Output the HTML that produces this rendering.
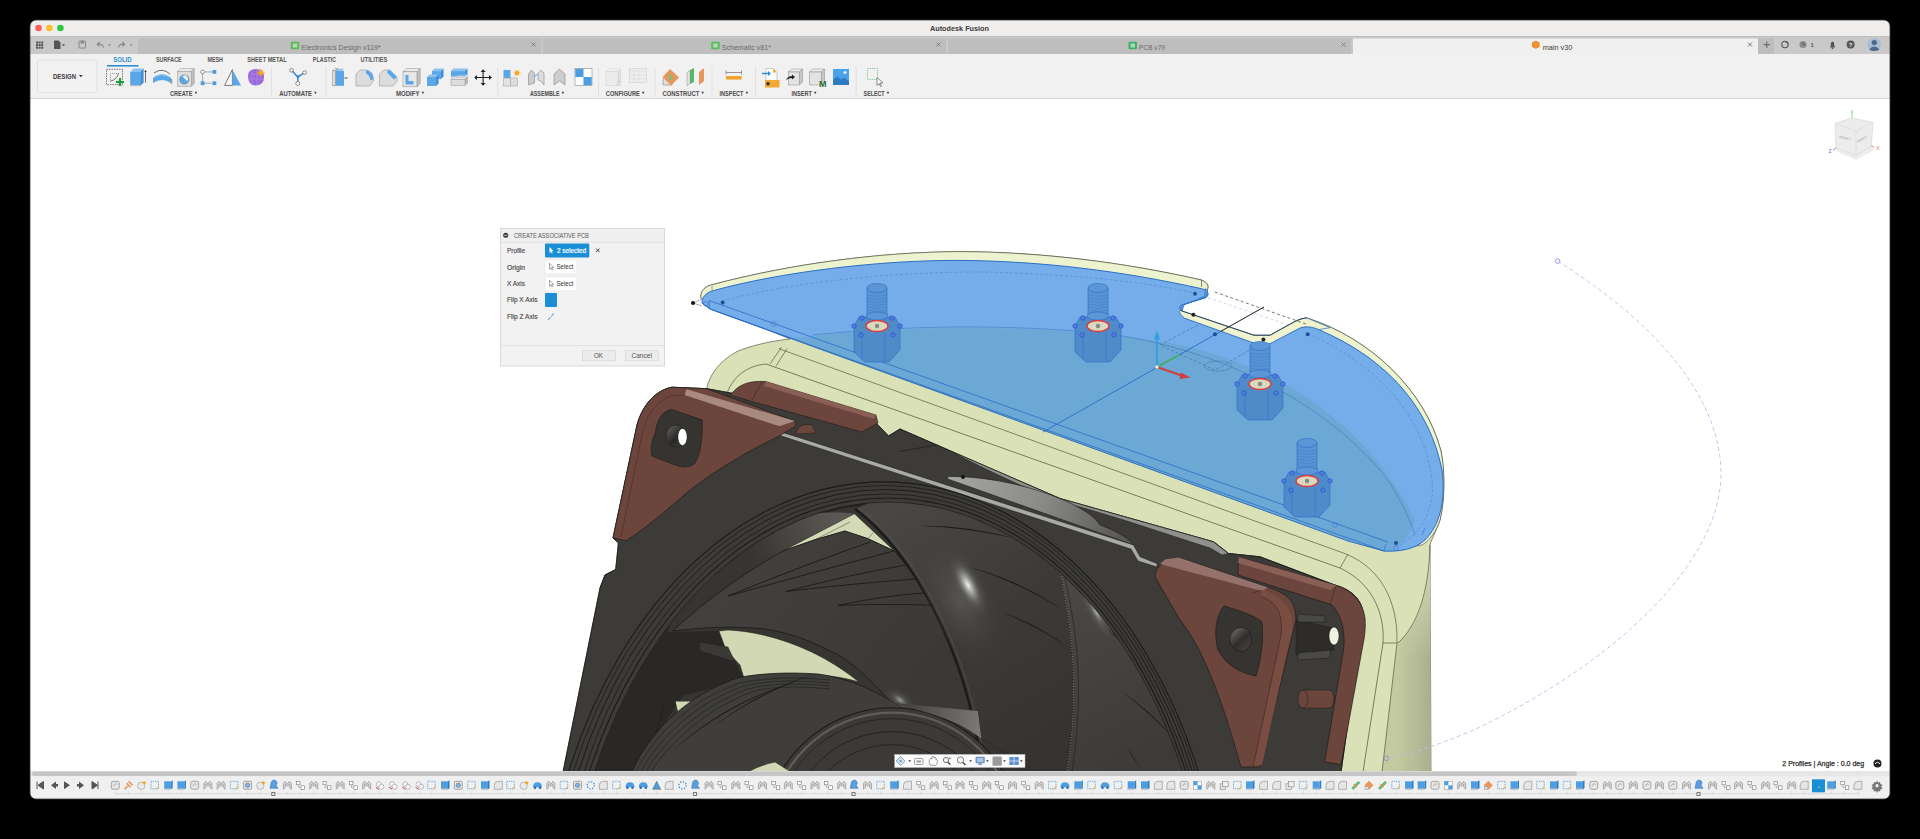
<!DOCTYPE html>
<html><head><meta charset="utf-8">
<style>
*{margin:0;padding:0}
html,body{width:1920px;height:839px;overflow:hidden;background:#000}
svg{position:absolute;left:0;top:0;font-family:"Liberation Sans",sans-serif}
</style></head><body>
<svg width="1920" height="839" viewBox="0 0 1920 839">
<rect width="1920" height="839" fill="#000"/>
<defs><clipPath id="winclip"><rect x="30" y="20" width="1860" height="779" rx="6"/></clipPath></defs>
<g clip-path="url(#winclip)">
<rect x="30" y="20" width="1860" height="779" rx="6" fill="#f0f0f0"/>
<rect x="30" y="20" width="1860" height="16" rx="6" fill="#efeeed"/>
<rect x="30" y="30" width="1860" height="6" fill="#efeeed"/>
<rect x="30" y="36" width="1860" height="18" fill="#c9c9c9"/>
<rect x="30" y="36" width="1860" height="1" fill="#bdbdbd"/>
<rect x="30" y="54" width="1860" height="45" fill="#f1f1f1"/>
<rect x="30" y="98" width="1860" height="1" fill="#dadada"/>
<circle cx="38.5" cy="28" r="3.3" fill="#fe5f57"/>
<circle cx="49.4" cy="28" r="3.3" fill="#febc2e"/>
<circle cx="60.4" cy="28" r="3.3" fill="#28c840"/>
<text x="930" y="31" font-size="7.6" fill="#3b3b3b" font-weight="bold" text-anchor="start" textLength="59" lengthAdjust="spacingAndGlyphs">Autodesk Fusion</text>
<rect x="36.0" y="41.5" width="2" height="2" fill="#555"/>
<rect x="36.0" y="44.1" width="2" height="2" fill="#555"/>
<rect x="36.0" y="46.7" width="2" height="2" fill="#555"/>
<rect x="38.6" y="41.5" width="2" height="2" fill="#555"/>
<rect x="38.6" y="44.1" width="2" height="2" fill="#555"/>
<rect x="38.6" y="46.7" width="2" height="2" fill="#555"/>
<rect x="41.2" y="41.5" width="2" height="2" fill="#555"/>
<rect x="41.2" y="44.1" width="2" height="2" fill="#555"/>
<rect x="41.2" y="46.7" width="2" height="2" fill="#555"/>
<path d="M54,40.5 h4.5 l2,2 v6.5 h-6.5 z" fill="#555"/>
<path d="M62,44.3 h3 l-1.5,2 z" fill="#555"/>
<rect x="79" y="41" width="6.5" height="7" rx="0.8" fill="none" stroke="#888" stroke-width="1"/><rect x="80.5" y="41" width="3.5" height="2.5" fill="#888"/>
<path d="M103.5,47.8 q0,-4.3 -6,-3.6 M99.8,42 l-2.6,2.2 l2.6,2.2" fill="none" stroke="#8a8a8a" stroke-width="1.1"/>
<path d="M108,44.3 h3 l-1.5,2 z" fill="#8a8a8a"/>
<path d="M118.5,47.8 q0,-4.3 6,-3.6 M122.2,42 l2.6,2.2 l-2.6,2.2" fill="none" stroke="#8a8a8a" stroke-width="1.1"/>
<path d="M129.7,44.3 h3 l-1.5,2 z" fill="#8a8a8a"/>
<rect x="138" y="38.5" width="403" height="15.5" fill="#bebebe"/>
<rect x="290.8" y="41.8" width="8.5" height="7.5" rx="1" fill="#5cb860"/><rect x="292.8" y="43.5" width="4.5" height="4" fill="#e8f5e8" opacity="0.6"/>
<text x="301.3" y="49.5" font-size="7.4" fill="#6b6b6b" font-weight="normal" text-anchor="start" textLength="79.5" lengthAdjust="spacingAndGlyphs">Electronics Design v119*</text>
<path d="M531.5,42.5 l4,4 M535.5,42.5 l-4,4" stroke="#7a7a7a" stroke-width="0.9"/>
<rect x="543" y="38.5" width="403" height="15.5" fill="#bebebe"/>
<rect x="711.2" y="41.8" width="8.5" height="7.5" rx="1" fill="#5cb860"/><rect x="713.2" y="43.5" width="4.5" height="4" fill="#e8f5e8" opacity="0.6"/>
<text x="721.7" y="49.5" font-size="7.4" fill="#6b6b6b" font-weight="normal" text-anchor="start" textLength="49.3" lengthAdjust="spacingAndGlyphs">Schematic v81*</text>
<path d="M936.5,42.5 l4,4 M940.5,42.5 l-4,4" stroke="#7a7a7a" stroke-width="0.9"/>
<rect x="948" y="38.5" width="403" height="15.5" fill="#bebebe"/>
<rect x="1128.5" y="41.8" width="8.5" height="7.5" rx="1" fill="#3fae6a"/><rect x="1130.5" y="43.5" width="4.5" height="4" fill="#e8f5e8" opacity="0.6"/>
<text x="1139" y="49.5" font-size="7.4" fill="#6b6b6b" font-weight="normal" text-anchor="start" textLength="26.0" lengthAdjust="spacingAndGlyphs">PCB v79</text>
<path d="M1341.5,42.5 l4,4 M1345.5,42.5 l-4,4" stroke="#7a7a7a" stroke-width="0.9"/>
<rect x="1353" y="38.5" width="405" height="15.5" fill="#f0f0f0"/>
<path d="M1532,42.3 l3.8,-1.6 l3.8,1.6 v4.6 l-3.8,1.8 l-3.8,-1.8 z" fill="#f08a2c"/><path d="M1532,42.3 l3.8,1.6 l3.8,-1.6 M1535.8,43.9 v4.8" stroke="#fbb468" stroke-width="0.5" fill="none"/>
<text x="1542.7" y="49.5" font-size="7.4" fill="#3a3a3a" font-weight="normal" text-anchor="start" textLength="29.6" lengthAdjust="spacingAndGlyphs">main v30</text>
<path d="M1748,42.5 l4,4 M1752,42.5 l-4,4" stroke="#6a6a6a" stroke-width="0.9"/>
<rect x="1758" y="38.5" width="16" height="15.5" fill="#bdbdbd"/>
<path d="M1766.7,41.5 v6.5 M1763.5,44.7 h6.5" stroke="#6f6f6f" stroke-width="1.2"/>
<circle cx="1785" cy="44.5" r="3.2" fill="none" stroke="#555" stroke-width="1.1"/><path d="M1785,41.3 l2.5,2.5" stroke="#555" stroke-width="1"/>
<circle cx="1803" cy="44.5" r="3.6" fill="#8a8a8a"/><path d="M1803,42.5 v2.2 h2" stroke="#555" stroke-width="0.8" fill="none"/>
<text x="1810.5" y="47" font-size="6" fill="#555" font-weight="bold" text-anchor="start" >1</text>
<path d="M1830,47.5 q0.8,-1 0.8,-3.5 q0,-2.6 1.7,-2.6 q1.7,0 1.7,2.6 q0,2.5 0.8,3.5 z" fill="#555"/><circle cx="1832.5" cy="48.4" r="0.8" fill="#555"/>
<circle cx="1850.6" cy="44.5" r="4" fill="#555"/><text x="1850.6" y="47" font-size="6" fill="#eee" font-weight="bold" text-anchor="middle" >?</text>
<circle cx="1874.3" cy="44.5" r="6.6" fill="#a9bcd3"/><circle cx="1874.3" cy="42.5" r="2.6" fill="#4e6a8a"/><path d="M1869,49.5 q5.3,-6 10.6,0 q-5.3,3 -10.6,0z" fill="#4e6a8a"/>
<rect x="37.5" y="60" width="59.5" height="32.5" rx="2" fill="#f2f2f2" stroke="#dcdcdc" stroke-width="0.8"/>
<text x="53" y="78.8" font-size="6.9" fill="#3a3a3a" font-weight="bold" text-anchor="start" textLength="23.1" lengthAdjust="spacingAndGlyphs">DESIGN</text>
<path d="M79,75 h3.6 l-1.8,2.2z" fill="#333"/>
<text x="113.3" y="62.2" font-size="6.7" fill="#2a8fcd" font-weight="bold" text-anchor="start" textLength="18.3" lengthAdjust="spacingAndGlyphs">SOLID</text>
<text x="156" y="62.2" font-size="6.7" fill="#555" font-weight="bold" text-anchor="start" textLength="25.7" lengthAdjust="spacingAndGlyphs">SURFACE</text>
<text x="207.4" y="62.2" font-size="6.7" fill="#555" font-weight="bold" text-anchor="start" textLength="15.6" lengthAdjust="spacingAndGlyphs">MESH</text>
<text x="247.3" y="62.2" font-size="6.7" fill="#555" font-weight="bold" text-anchor="start" textLength="39.3" lengthAdjust="spacingAndGlyphs">SHEET METAL</text>
<text x="312.8" y="62.2" font-size="6.7" fill="#555" font-weight="bold" text-anchor="start" textLength="23.2" lengthAdjust="spacingAndGlyphs">PLASTIC</text>
<text x="360.6" y="62.2" font-size="6.7" fill="#555" font-weight="bold" text-anchor="start" textLength="26.7" lengthAdjust="spacingAndGlyphs">UTILITIES</text>
<rect x="107" y="65" width="31.5" height="1.6" fill="#2a8fcd"/>
<text x="170" y="96" font-size="6.9" fill="#4a4a4a" font-weight="bold" text-anchor="start" textLength="22.5" lengthAdjust="spacingAndGlyphs">CREATE</text>
<path d="M194.6,91.8 h2.6 l-1.3,2.4z" fill="#4a4a4a"/>
<text x="279.2" y="96" font-size="6.9" fill="#4a4a4a" font-weight="bold" text-anchor="start" textLength="32.8" lengthAdjust="spacingAndGlyphs">AUTOMATE</text>
<path d="M314.1,91.8 h2.6 l-1.3,2.4z" fill="#4a4a4a"/>
<text x="396" y="96" font-size="6.9" fill="#4a4a4a" font-weight="bold" text-anchor="start" textLength="23.5" lengthAdjust="spacingAndGlyphs">MODIFY</text>
<path d="M421.6,91.8 h2.6 l-1.3,2.4z" fill="#4a4a4a"/>
<text x="530" y="96" font-size="6.9" fill="#4a4a4a" font-weight="bold" text-anchor="start" textLength="29.5" lengthAdjust="spacingAndGlyphs">ASSEMBLE</text>
<path d="M561.6,91.8 h2.6 l-1.3,2.4z" fill="#4a4a4a"/>
<text x="605.8" y="96" font-size="6.9" fill="#4a4a4a" font-weight="bold" text-anchor="start" textLength="34.0" lengthAdjust="spacingAndGlyphs">CONFIGURE</text>
<path d="M641.9,91.8 h2.6 l-1.3,2.4z" fill="#4a4a4a"/>
<text x="662.5" y="96" font-size="6.9" fill="#4a4a4a" font-weight="bold" text-anchor="start" textLength="36.8" lengthAdjust="spacingAndGlyphs">CONSTRUCT</text>
<path d="M701.4,91.8 h2.6 l-1.3,2.4z" fill="#4a4a4a"/>
<text x="719.5" y="96" font-size="6.9" fill="#4a4a4a" font-weight="bold" text-anchor="start" textLength="24.0" lengthAdjust="spacingAndGlyphs">INSPECT</text>
<path d="M745.6,91.8 h2.6 l-1.3,2.4z" fill="#4a4a4a"/>
<text x="791.5" y="96" font-size="6.9" fill="#4a4a4a" font-weight="bold" text-anchor="start" textLength="20.3" lengthAdjust="spacingAndGlyphs">INSERT</text>
<path d="M813.9,91.8 h2.6 l-1.3,2.4z" fill="#4a4a4a"/>
<text x="863.6" y="96" font-size="6.9" fill="#4a4a4a" font-weight="bold" text-anchor="start" textLength="21.0" lengthAdjust="spacingAndGlyphs">SELECT</text>
<path d="M886.7,91.8 h2.6 l-1.3,2.4z" fill="#4a4a4a"/>
<rect x="271" y="67" width="0.8" height="30" fill="#dedede"/>
<rect x="325.6" y="67" width="0.8" height="30" fill="#dedede"/>
<rect x="497.5" y="67" width="0.8" height="30" fill="#dedede"/>
<rect x="598" y="67" width="0.8" height="30" fill="#dedede"/>
<rect x="654.6" y="67" width="0.8" height="30" fill="#dedede"/>
<rect x="711.6" y="67" width="0.8" height="30" fill="#dedede"/>
<rect x="755" y="67" width="0.8" height="30" fill="#dedede"/>
<rect x="855.7" y="67" width="0.8" height="30" fill="#dedede"/>
<rect x="106.5" y="69.3" width="16" height="15.3" fill="none" stroke="#555" stroke-width="0.8" stroke-dasharray="1.5 1"/>
<path d="M110.5,82 v-8.5 h8.5" fill="none" stroke="#777" stroke-width="0.7" stroke-dasharray="1.2 0.8"/><path d="M110.5,81 q6,-1 8,-7.5" fill="none" stroke="#555" stroke-width="0.8"/>
<path d="M120,78 v8 M116,82 h8" stroke="#1e9e3a" stroke-width="2.2"/>
<path d="M130.2,72.0 l3.4,-3.4 h10 l-3.4,3.4 z" fill="#8cc2ef" stroke="none" stroke-width="0.5"/><path d="M140.2,72.0 l3.4,-3.4 v14 l-3.4,3.4 z" fill="#3f8fd6" stroke="none" stroke-width="0.5"/><rect x="130.2" y="72.0" width="10" height="14" fill="#5aa6e6" stroke="none" stroke-width="0.5"/>
<rect x="130.2" y="85" width="10" height="1.2" fill="#bbb"/><path d="M145.5,70.5 v12" stroke="#333" stroke-width="0.7"/><path d="M144.3,72 l1.2,-2 l1.2,2z" fill="#333"/>
<path d="M153,78 q9,-6 18,0 v5 q-9,-6 -18,0z" fill="#5aa6e6"/><path d="M153,78 q9,-6 18,0 l-2,-2 q-7,-4 -14,0z" fill="#8cc2ef"/><path d="M154,73 q8,-6 16,1" fill="none" stroke="#333" stroke-width="0.7"/><path d="M171,79 a2,3 0 0 1 0,5" fill="none" stroke="#333" stroke-width="0.6"/>
<path d="M177.3,71.5 l3,-3 h14 l-3,3 z" fill="#e9e9e9" stroke="#9a9a9a" stroke-width="0.5"/><path d="M191.3,71.5 l3,-3 v15 l-3,3 z" fill="#bdbdbd" stroke="#9a9a9a" stroke-width="0.5"/><rect x="177.3" y="71.5" width="14" height="15" fill="#dcdcdc" stroke="#9a9a9a" stroke-width="0.5"/>
<circle cx="184.3" cy="79.5" r="4.6" fill="#5aa6e6" stroke="#777" stroke-width="0.6"/><path d="M182.5,76.5 a3,3 0 0 1 4.5,4.5z" fill="#e8f2fb"/>
<path d="M205,71.9 h9 M202.6,74 v9.2 h9" stroke="#888" stroke-width="0.7" fill="none"/><circle cx="202.6" cy="71.9" r="1.8" fill="#fff" stroke="#666" stroke-width="0.7"/>
<rect x="212.5" y="70.0" width="3.8" height="3.8" fill="#4a9ee0"/>
<rect x="200.7" y="81.3" width="3.8" height="3.8" fill="#4a9ee0"/>
<rect x="212.5" y="81.3" width="3.8" height="3.8" fill="#4a9ee0"/>
<path d="M224.6,85.4 l7.8,-15.7 v15.7z" fill="#fff" stroke="#555" stroke-width="0.8"/><path d="M232.4,69.7 l8.6,15.7 h-8.6z" fill="#5aa6e6"/>
<path d="M248,76 q0,-7 8,-7 q8,0 8,8 q0,8 -8,8.5 q-8,0 -8,-9.5z" fill="#9a6ad8"/><path d="M250,74 h13 M249,79 h14 M252,70 v15 M257,69 v16" stroke="#b78ff0" stroke-width="0.6"/>
<circle cx="260.8" cy="72.7" r="2.4" fill="#f7a623"/><path d="M260.8,68.5 v8.4 M256.6,72.7 h8.4 M257.8,69.7 l6,6 M263.8,69.7 l-6,6" stroke="#f7a623" stroke-width="0.7"/>
<path d="M291.5,70.3 l6.3,6.7 l6.8,-4.4 M297.8,77 v6.5" stroke="#3d8fd6" stroke-width="1.6" fill="none"/><path d="M295,75 l3,3.5 l3,-3z" fill="#3d8fd6"/>
<circle cx="291.5" cy="70.3" r="1.8" fill="#fff" stroke="#555" stroke-width="0.7"/><circle cx="304.6" cy="72.6" r="1.8" fill="#fff" stroke="#555" stroke-width="0.7"/><circle cx="297.8" cy="83.5" r="2" fill="#fff" stroke="#666" stroke-width="0.7"/>
<path d="M332.5,70.8 l2.2,-2.2 h3 l-2.2,2.2 z" fill="#eee" stroke="#888" stroke-width="0.5"/><path d="M335.5,70.8 l2.2,-2.2 v15 l-2.2,2.2 z" fill="#bbb" stroke="#888" stroke-width="0.5"/><rect x="332.5" y="70.8" width="3" height="15" fill="#ddd" stroke="#888" stroke-width="0.5"/><rect x="336" y="70.8" width="8" height="15" fill="#5aa6e6"/><path d="M336,70.8 l2,-2 h6 l-2,2z" fill="#8cc2ef"/><path d="M344.5,78 h3" stroke="#222" stroke-width="0.8"/>
<path d="M356,86 v-12 l4,-4 h6 q7,1 7.5,9 v2 l-4,5z" fill="#dcdcdc" stroke="#999" stroke-width="0.6"/><path d="M366,70 q7,1 7.5,9 l-3,1.5 q-0.5,-5 -4.5,-7z" fill="#5aa6e6"/>
<path d="M379.5,86 v-12 l4,-4 h6 l7.5,7.5 v4 l-4,4.5z" fill="#dcdcdc" stroke="#999" stroke-width="0.6"/><path d="M388,70 h2 l7,7 l-3,2.5 l-7,-7z" fill="#5aa6e6"/>
<path d="M403,71.8 l3.2,-3.2 h14 l-3.2,3.2 z" fill="#eee" stroke="#8a8a8a" stroke-width="0.5"/><path d="M417,71.8 l3.2,-3.2 v15 l-3.2,3.2 z" fill="#c3c3c3" stroke="#8a8a8a" stroke-width="0.5"/><rect x="403" y="71.8" width="14" height="15" fill="#e6e6e6" stroke="#8a8a8a" stroke-width="0.5"/><path d="M405.5,75 h3 v6 h5 v3.5 h-8z" fill="#5aa6e6"/>
<path d="M432,71.1 l2.5,-2.5 h9 l-2.5,2.5 z" fill="#8cc2ef" stroke="none" stroke-width="0.5"/><path d="M441,71.1 l2.5,-2.5 v8 l-2.5,2.5 z" fill="#3f8fd6" stroke="none" stroke-width="0.5"/><rect x="432" y="71.1" width="9" height="8" fill="#5aa6e6" stroke="none" stroke-width="0.5"/><path d="M427,77.0 l2.5,-2.5 h9 l-2.5,2.5 z" fill="#8cc2ef" stroke="none" stroke-width="0.5"/><path d="M436,77.0 l2.5,-2.5 v9 l-2.5,2.5 z" fill="#3f8fd6" stroke="none" stroke-width="0.5"/><rect x="427" y="77.0" width="9" height="9" fill="#5aa6e6" stroke="none" stroke-width="0.5"/>
<path d="M451,71.1 l2.5,-2.5 h14 l-2.5,2.5 z" fill="#8cc2ef" stroke="none" stroke-width="0.5"/><path d="M465,71.1 l2.5,-2.5 v5 l-2.5,2.5 z" fill="#3f8fd6" stroke="none" stroke-width="0.5"/><rect x="451" y="71.1" width="14" height="5" fill="#5aa6e6" stroke="none" stroke-width="0.5"/><path d="M450.5,77 q9,-2 18,-2" stroke="#8cc2ef" stroke-width="1" fill="none"/><path d="M451,79.5 l2.5,-2.5 h14 l-2.5,2.5 z" fill="#e6e6e6" stroke="#999" stroke-width="0.5"/><path d="M465,79.5 l2.5,-2.5 v6 l-2.5,2.5 z" fill="#bbb" stroke="#999" stroke-width="0.5"/><rect x="451" y="79.5" width="14" height="6" fill="#ddd" stroke="#999" stroke-width="0.5"/>
<path d="M483.1,70 v15 M475,77.5 h16.4" stroke="#222" stroke-width="1.1"/><path d="M480.6,72 l2.5,-2.8 l2.5,2.8z M480.6,83 l2.5,2.8 l2.5,-2.8z M477,75 l-2.8,2.5 l2.8,2.5z M489,75 l2.8,2.5 l-2.8,2.5z" fill="#222"/>
<rect x="503.5" y="70" width="7" height="8" fill="#5aa6e6"/><rect x="503.5" y="78" width="7" height="8" fill="#e3e3e3" stroke="#999" stroke-width="0.5"/><rect x="510.5" y="78" width="7" height="8" fill="#ddd" stroke="#999" stroke-width="0.5"/>
<circle cx="517" cy="73" r="2.2" fill="#f7a623"/><path d="M517,69.3 v7.4 M513.3,73 h7.4 M514.4,70.4 l5.2,5.2 M519.6,70.4 l-5.2,5.2" stroke="#f7a623" stroke-width="0.6"/>
<path d="M528.5,85 v-11 l3,-4 l3,3 v10z" fill="#ccc" stroke="#888" stroke-width="0.6"/><path d="M538,73 l3,-3 l3,3 v12 l-3,-4 l-3,-1z" fill="#ddd" stroke="#888" stroke-width="0.6"/><path d="M534,77 l4,-3" stroke="#5aa6e6" stroke-width="1"/>
<path d="M554,85 v-11 l5.5,-5 l5.5,5 v11 l-5.5,-4z" fill="#cdcdcd" stroke="#888" stroke-width="0.6"/>
<rect x="575" y="68.5" width="17" height="17" fill="#fff" stroke="#888" stroke-width="0.6"/><rect x="575.3" y="68.8" width="8.2" height="8.2" fill="#4a9ee0"/><rect x="583.5" y="77" width="8.2" height="8.2" fill="#4a9ee0"/>
<path d="M606,71.5 l2.5,-2.5 h12 l-2.5,2.5 z" fill="#f2f2f2" stroke="#d0d0d0" stroke-width="0.5"/><path d="M618,71.5 l2.5,-2.5 v14 l-2.5,2.5 z" fill="#e0e0e0" stroke="#d0d0d0" stroke-width="0.5"/><rect x="606" y="71.5" width="12" height="14" fill="#ececec" stroke="#d0d0d0" stroke-width="0.5"/><path d="M616,82 h6 M616,85 h6" stroke="#d0d0d0" stroke-width="0.8"/>
<rect x="629.5" y="68.5" width="17" height="14" fill="#eee" stroke="#d4d4d4" stroke-width="0.7"/><path d="M629.5,71 h17 M629.5,75 h17 M629.5,79 h17 M634,71 v12 M639,71 v12" stroke="#d8d8d8" stroke-width="0.6"/>
<path d="M663,79 l4,-4 h5 v10 h-9z" fill="#e0e0e0" stroke="#888" stroke-width="0.6"/><path d="M670,69 l9,8.5 l-8,8 l-8.5,-8.5z" fill="#e8965a"/><path d="M668.5,76 l3.5,-2 l1,4 l-3.5,3z" fill="#7fbf7f"/>
<path d="M687,73 l3,-3 v13 l-3,3z" fill="#e6e6e6" stroke="#888" stroke-width="0.5"/><path d="M690,70 l4,-2 v14 l-4,2z" fill="#58b66a"/><path d="M699,72 l5,-4 v13 l-5,4z" fill="#e8965a"/>
<path d="M726,70.5 v4 M741.5,70.5 v4 M726.5,72.5 h14.5" stroke="#555" stroke-width="0.6"/><rect x="726" y="76" width="15.7" height="3.6" fill="#f3a833"/><path d="M727,77.8 h14" stroke="#c98116" stroke-width="0.5" stroke-dasharray="1 0.6"/>
<path d="M766,68.5 h7 l4,4 v8 h-11z" fill="#fff" stroke="#aaa" stroke-width="0.6"/><path d="M773,68.5 l4,4 h-4z" fill="#f3a833"/><rect x="765" y="80" width="14.5" height="7.5" fill="#f3a833"/><circle cx="768" cy="83.7" r="1.8" fill="#333"/><path d="M762,73.5 h7" stroke="#2a8fdd" stroke-width="1.6"/><path d="M768,71 l3,2.5 l-3,2.5z" fill="#2a8fdd"/>
<path d="M788.5,72 l3,-3 h11 l-3,3 z" fill="#eee" stroke="#888" stroke-width="0.5"/><path d="M799.5,72 l3,-3 v13 l-3,3 z" fill="#c8c8c8" stroke="#888" stroke-width="0.5"/><rect x="788.5" y="72" width="11" height="13" fill="#e3e3e3" stroke="#888" stroke-width="0.5"/><path d="M786,80 q2,-4 6,-4 v-1.5 l3,2.5 l-3,2.5 v-1.5 q-3,0 -6,2z" fill="#222"/>
<path d="M809.5,72 l3,-3 h12 l-3,3 z" fill="#eee" stroke="#888" stroke-width="0.5"/><path d="M821.5,72 l3,-3 v13 l-3,3 z" fill="#c8c8c8" stroke="#888" stroke-width="0.5"/><rect x="809.5" y="72" width="12" height="13" fill="#e3e3e3" stroke="#888" stroke-width="0.5"/><text x="819" y="86.5" font-size="9" font-weight="bold" fill="#2e6b2e">M</text>
<rect x="833" y="69" width="16" height="16" fill="#4aa3e8"/><path d="M833,85 v-5 l4,-3.5 l4,3 l3,-2 l5,3.5 v4z" fill="#2c7cc4"/><circle cx="845" cy="72.5" r="1.5" fill="#e8f4fc"/>
<rect x="867.5" y="68.5" width="10" height="11" fill="none" stroke="#6cbf8a" stroke-width="0.8" stroke-dasharray="1.3 1"/><path d="M877,77.5 v8 l2,-2 l1.5,3 l1,-0.5 l-1.5,-3 h3z" fill="#fff" stroke="#444" stroke-width="0.6"/>
<rect x="30" y="99" width="1860" height="672" fill="#fff"/>
<defs>
<radialGradient id="glare1"><stop offset="0" stop-color="#f2f2ee" stop-opacity="1"/><stop offset="0.25" stop-color="#b5b5b1" stop-opacity="0.8"/><stop offset="0.6" stop-color="#6a6965" stop-opacity="0.4"/><stop offset="1" stop-color="#4a4945" stop-opacity="0"/></radialGradient>
<radialGradient id="glare2"><stop offset="0" stop-color="#bcbcb8" stop-opacity="0.9"/><stop offset="0.35" stop-color="#74736f" stop-opacity="0.5"/><stop offset="1" stop-color="#4a4945" stop-opacity="0"/></radialGradient>
<radialGradient id="glare3"><stop offset="0" stop-color="#b0b0ac" stop-opacity="0.85"/><stop offset="0.4" stop-color="#6a6965" stop-opacity="0.4"/><stop offset="1" stop-color="#4a4945" stop-opacity="0"/></radialGradient>
<linearGradient id="bladeG" x1="0" y1="480" x2="0" y2="772" gradientUnits="userSpaceOnUse"><stop offset="0" stop-color="#5b5a55"/><stop offset="0.5" stop-color="#45443f"/><stop offset="1" stop-color="#3a3935"/></linearGradient>
<linearGradient id="faceG" x1="960" y1="478" x2="1120" y2="535" gradientUnits="userSpaceOnUse"><stop offset="0" stop-color="#a2a29e"/><stop offset="0.5" stop-color="#8a8a86"/><stop offset="1" stop-color="#5a5955"/></linearGradient>
<linearGradient id="bladeA" x1="700" y1="540" x2="900" y2="700" gradientUnits="userSpaceOnUse"><stop offset="0" stop-color="#43423e"/><stop offset="1" stop-color="#3a3935"/></linearGradient>
<linearGradient id="bladeB" x1="900" y1="505" x2="1050" y2="760" gradientUnits="userSpaceOnUse"><stop offset="0" stop-color="#484743"/><stop offset="0.5" stop-color="#3b3a36"/><stop offset="1" stop-color="#343330"/></linearGradient>
<linearGradient id="bladeC" x1="1070" y1="570" x2="1160" y2="760" gradientUnits="userSpaceOnUse"><stop offset="0" stop-color="#4a4945"/><stop offset="1" stop-color="#3c3b37"/></linearGradient>
<linearGradient id="bladeE" x1="760" y1="570" x2="840" y2="520" gradientUnits="userSpaceOnUse"><stop offset="0" stop-color="#363531"/><stop offset="1" stop-color="#5a5955"/></linearGradient>
<linearGradient id="wedgeG" x1="900" y1="705" x2="980" y2="725" gradientUnits="userSpaceOnUse"><stop offset="0" stop-color="#3f3e3a"/><stop offset="1" stop-color="#7a7975"/></linearGradient>
<linearGradient id="holeG" x1="1232" y1="630" x2="1250" y2="650" gradientUnits="userSpaceOnUse"><stop offset="0" stop-color="#6a6965"/><stop offset="0.5" stop-color="#2f2e2b"/><stop offset="1" stop-color="#45443f"/></linearGradient><linearGradient id="holeG2" x1="668" y1="428" x2="686" y2="446" gradientUnits="userSpaceOnUse"><stop offset="0" stop-color="#5a5955"/><stop offset="0.5" stop-color="#2a2927"/><stop offset="1" stop-color="#45443f"/></linearGradient>
<radialGradient id="softG"><stop offset="0" stop-color="#6a6965" stop-opacity="0.55"/><stop offset="1" stop-color="#3c3b37" stop-opacity="0"/></radialGradient>
<linearGradient id="houseR" x1="1397" y1="0" x2="1432" y2="0" gradientUnits="userSpaceOnUse"><stop offset="0" stop-color="#c2ca9f"/><stop offset="1" stop-color="#a9ae8e"/></linearGradient><linearGradient id="houseRV" x1="0" y1="540" x2="0" y2="660" gradientUnits="userSpaceOnUse"><stop offset="0" stop-color="#dae1b7" stop-opacity="1"/><stop offset="1" stop-color="#dae1b7" stop-opacity="0"/></linearGradient>
<clipPath id="vp"><rect x="30" y="99" width="1860" height="672"/></clipPath>
<clipPath id="frameclip"><path d="M563,772 L600,588 L605,575 L615.7,569.5 L618.4,543 L613,538 L637,425 C641,410 652,391 672,387.2 L706.5,388.7 L747,396 L876,423 L888.5,436 L900,429 L1060,498.5 L1213.6,541.8 L1228.6,553.5 L1260,556.8 L1336,585.5 C1352,590 1362,600 1363,614 L1341,772 Z"/></clipPath>
<clipPath id="innerclip"><path d="M595.1,772 A323.5,464.5 0 0 1 1182.3,772 Z"/></clipPath>
</defs>
<g clip-path="url(#vp)">
<path d="M701,298 C700,291 705,286 713,284.5 C790,264 880,252 960,251.6 C1041,252 1122,262 1201.5,280 C1206,282 1208,284 1208,287 L1206,297 L1182,305 L1180,310.5 L1254,335.3 L1270,335.3 L1294,322 C1300,319 1304,318 1307,318 C1370,338 1425,390 1441,451 C1445,470 1445,500 1440,520 C1436,532 1432,538 1430,545 L1431,772 L1341,772 L1363,614 C1362,600 1352,590 1336,585.5 L1260,556.8 L1228.6,553.5 L1213.6,541.8 L1060,498.5 L900,429 L888.5,436 L876,423 L747,396 L706.5,388.7 C710,375 718,362 737,351.5 C750,346 770,341 790,339 L712,307 Z" fill="#dae1b7" stroke="#3d4630" stroke-width="0.6"/>
<path d="M701,298 C700,291 705,286 713,284.5 C790,264 880,252 960,251.6 C1041,252 1122,262 1201.5,280 C1206,282 1208,284 1208,287 L1206,297 L1182,305 L1180,310.5 L1254,335.3 L1270,335.3 L1294,322 C1300,319 1304,318 1307,318 C1370,338 1425,390 1441,451 C1445,470 1445,500 1440,520 C1436,532 1430,540 1422,545 L1384,551 L710,309 Z" fill="#eef3cf" stroke="#3d4630" stroke-width="0.6"/>
<path d="M1397,643 C1420,625 1429,590 1430,545 L1431,772 L1382,772 Z" fill="url(#houseR)"/><path d="M1397,643 C1420,625 1429,590 1430,545 L1431,680 L1390,680 Z" fill="url(#houseRV)"/>
<path d="M726,396 C732,378 745,366 766,364 L1340,568 C1370,582 1385,610 1383,643 L1363,772" fill="none" stroke="#3d4630" stroke-width="0.65"/>
<path d="M778.7,348.6 L1346,554 C1380,568 1398,600 1397,643 L1382,772" fill="none" stroke="#3d4630" stroke-width="0.6"/>
<path d="M770,364 L781.6,347 M776,366 L787,348.6" fill="none" stroke="#3d4630" stroke-width="0.6"/>
<path d="M1383,643 L1397,643 M1348,554 L1340,568" fill="none" stroke="#3d4630" stroke-width="0.6"/>
<path d="M1430,545 C1429,590 1418,625 1398,643" fill="none" stroke="#3d4630" stroke-width="0.6"/>
<path d="M563,772 L600,588 L605,575 L615.7,569.5 L618.4,543 L613,538 L637,425 C641,410 652,391 672,387.2 L706.5,388.7 L747,396 L876,423 L888.5,436 L900,429 L1060,498.5 L1213.6,541.8 L1228.6,553.5 L1260,556.8 L1336,585.5 C1352,590 1362,600 1363,614 L1341,772 Z" fill="#3c3b37" stroke="#1e1d1b" stroke-width="0.7"/>
<g clip-path="url(#frameclip)">
<path d="M939.3,444.3 L1100,501.5 L1213.6,541.8 L1228.6,553.5 L1222,555 L1210,548 C1160,532 1120,518 1080,507 C1040,496 990,472 947.7,449.5 Z" fill="#8f8f8b" stroke="#1e1d1b" stroke-width="0.5"/>
<path d="M900,451.5 L939.3,444.3" stroke="#1e1d1b" stroke-width="0.7"/>
<path d="M947.7,476.5 C985,476 1030,485 1067,501.5 C1085,510 1095,517 1100,525 C1120,532 1130,540 1133.5,545 L947.7,479 Z" fill="url(#faceG)" stroke="#1e1d1b" stroke-width="0.6"/>
<path d="M780,431.7 L801.7,438.4 L1133.5,545 L1140,556.8 L1157,563.5 L1157,567 L1138,561 L1131,549 L800,442 L780,435.5 Z" fill="#a9a9a5" stroke="#1e1d1b" stroke-width="0.5"/>
<path d="M568.6,772 A344,485 0 0 1 1198.6,772" fill="none" stroke="#1c1b19" stroke-width="1.1"/>
<path d="M573.1,772 A340.5,481.5 0 0 1 1195.8,772" fill="none" stroke="#1c1b19" stroke-width="0.8"/>
<path d="M578.3,772 A336.5,477.5 0 0 1 1192.6,772" fill="none" stroke="#1c1b19" stroke-width="1.0"/>
<path d="M584.1,772 A332,473 0 0 1 1189.1,772" fill="none" stroke="#1c1b19" stroke-width="0.8"/>
<path d="M589.3,772 A328,469 0 0 1 1185.9,772" fill="none" stroke="#1c1b19" stroke-width="1.1"/>
<path d="M594.5,772 A324,465 0 0 1 1182.7,772" fill="none" stroke="#1c1b19" stroke-width="0.9"/>
<path d="M595.8,772 A323,464 0 0 1 1181.9,772 Z" fill="#363531" stroke="#1c1b19" stroke-width="0.8"/>
<g clip-path="url(#innerclip)">
<path d="M640,630 L672,632 L719,631 L744.5,679.8 L683,696 L632,772 L598,772 C605,720 620,670 640,630 Z" fill="#2a2826"/>
<path d="M673,631 C700,605 740,575 784,550.5 L854.4,513.8 C840,512 820,512 800,515 C740,530 690,570 660,610 Z" fill="url(#bladeE)"/>
<path d="M783.8,550.5 L854.4,513.8 L894.4,551 L867.7,538.6 L844.8,531 L815.3,539.6 Z" fill="#d4dab5" stroke="#1e1d1b" stroke-width="0.5"/>
<path d="M815.3,539.6 L850,522 M867.7,538.6 L873,533" stroke="#1e1d1b" stroke-width="0.4"/>
<path d="M719,631 L728,630 C770,632 820,650 859,682 C830,673 790,672 744.5,679.8 L740,665 L726,650 Z" fill="#d2d8b3" stroke="#1e1d1b" stroke-width="0.5"/>
<path d="M699,641.7 L728,647 L735,662 L700,651 Z" fill="#3a3935" stroke="#1e1d1b" stroke-width="0.4"/>
<path d="M675.6,701.5 L695.5,701.5 L679,716 Z" fill="#d2d8b3"/>
<path d="M664.7,705 L654,737.8" stroke="#1c1b19" stroke-width="0.6"/>
<path d="M673,631 C700,605 740,575 784,550.5 L815.3,539.6 L844.8,531 L867.7,538.6 L894.4,551 C930,590 960,650 972,712 L900,712 C880,690 860,668 840,656 C810,640 790,633 765,629 C735,626 705,627 673,631 Z" fill="url(#bladeA)" stroke="#1c1b19" stroke-width="0.8"/>
<path d="M855.3,509 C880,490 1000,490 1059,568 C1075,640 1078,700 1067,772 L982,772 C968,650 910,550 855.3,509 Z" fill="url(#bladeB)" stroke="#1c1b19" stroke-width="0.9"/>
<path d="M855.3,509 C910,550 968,650 982,772" fill="none" stroke="#1c1b19" stroke-width="2.4"/>
<path d="M858,507 C913,548 971,648 985,770" fill="none" stroke="#5a5954" stroke-width="0.7"/>
<path d="M1059,568 C1110,585 1180,640 1200,700 L1210,772 L1067,772 C1078,700 1075,640 1059,568 Z" fill="url(#bladeC)" stroke="#1c1b19" stroke-width="0.8"/>
<path d="M632,772 C650,730 690,694 737,678 C760,673 790,672 818,674 C860,680 895,700 930,730 L900,772 Z" fill="#3f3e3a" stroke="#1c1b19" stroke-width="0.8"/>
<path d="M636,772 C655,732 695,698 740,683 C770,677 800,677 830,680" fill="none" stroke="#1c1b19" stroke-width="0.55"/>
<path d="M641,772 C660,735 700,701 744,686 C770,680 800,680 830,683" fill="none" stroke="#1c1b19" stroke-width="0.55"/>
<path d="M646,772 C665,738 705,704 748,689 C770,683 800,683 830,686" fill="none" stroke="#1c1b19" stroke-width="0.55"/>
<path d="M651,772 C670,741 710,707 752,692 C770,686 800,686 830,689" fill="none" stroke="#1c1b19" stroke-width="0.55"/>
<path d="M918.7,525.7 Q970,525 1020.6,539.8 Q970,527.5 918.7,525.7 Z" fill="#1c1b19"/>
<path d="M966,566 Q1020,580 1066,612 Q1020,582.5 966,566 Z" fill="#1c1b19"/>
<path d="M1001,612 Q1040,625 1070,649 Q1040,627.5 1001,612 Z" fill="#1c1b19"/>
<path d="M1101.5,624 Q1130,645 1150.7,684 Q1130,647.5 1101.5,624 Z" fill="#1c1b19"/>
<path d="M1121,691 Q1150,710 1175,740 Q1150,712.5 1121,691 Z" fill="#1c1b19"/>
<path d="M1126,747 Q1133,755 1140,768 Q1133,757.5 1126,747 Z" fill="#1c1b19"/>
<path d="M713,727 Q760,690 815.7,673.8 Q760,692.5 713,727 Z" fill="#1c1b19"/>
<path d="M668,755 Q720,705 789.5,683.6 Q720,707.5 668,755 Z" fill="#1c1b19"/>
<path d="M727.9,596.1 Q804.2,565.0 870.5,541.9 M727.9,596.1 Q815.8499999999999,571.55 893.8,551" fill="none" stroke="#1c1b19" stroke-width="0.9"/>
<path d="M786,591.5 Q851.0,574.25 906,565 M786,591.5 Q855.75,583.25 915.5,579" fill="none" stroke="#1c1b19" stroke-width="0.9"/>
<path d="M838,605.4 Q886.4,595.2 924.8,593 M838,605.4 Q891.0,603.4 934,605.4" fill="none" stroke="#1c1b19" stroke-width="0.9"/>
<path d="M1059,568 C1075,640 1078,700 1067,772" fill="none" stroke="#9a9a96" stroke-width="0.7" stroke-dasharray="1.5 1.2"/><path d="M1063,570 C1080,640 1083,700 1072,772" fill="none" stroke="#1c1b19" stroke-width="0.5"/>
<ellipse cx="960" cy="600" rx="40" ry="75" fill="url(#softG)" transform="rotate(-25 960 600)"/>
<ellipse cx="968" cy="585" rx="14" ry="36" fill="url(#glare1)" transform="rotate(-28 968 585)"/>
<ellipse cx="1096" cy="612" rx="9" ry="34" fill="url(#glare2)" transform="rotate(-30 1096 612)"/>
<ellipse cx="900" cy="700" rx="20" ry="10" fill="url(#glare3)" transform="rotate(35 900 700)"/>
</g>
<circle cx="892" cy="835.7" r="128" fill="#3b3a36" stroke="#1c1b19" stroke-width="1.1"/>
<circle cx="892" cy="835.7" r="123" fill="none" stroke="#5e5d59" stroke-width="2.2"/>
<circle cx="892" cy="835.7" r="117" fill="none" stroke="#1c1b19" stroke-width="0.7"/>
<circle cx="892" cy="835.7" r="104" fill="none" stroke="#1c1b19" stroke-width="0.8"/>
<circle cx="892" cy="835.7" r="91" fill="none" stroke="#1c1b19" stroke-width="0.7"/>
<path d="M894.6,703 L977.8,711 L981.3,738.4 C970,730 960,725 954.8,722.5 C940,716 925,712 894.6,703 Z" fill="url(#wedgeG)"/>
<path d="M981.3,738.4 L1036,772" stroke="#1c1b19" stroke-width="0.6" stroke-dasharray="1.5 1"/>
<path d="M748,772 C755,768 765,764 775,762 L791,772 Z" fill="#d2d8b3" stroke="#1c1b19" stroke-width="0.5"/>
</g>
<path d="M563,772 L600,588 L605,575 L615.7,569.5 L618.4,543 L613,538 L637,425 C641,410 652,391 672,387.2 L706.5,388.7 L747,396 L876,423 L888.5,436 L900,429 L1060,498.5 L1213.6,541.8 L1228.6,553.5 L1260,556.8 L1336,585.5 C1352,590 1362,600 1363,614 L1341,772 Z" fill="none" stroke="#1e1d1b" stroke-width="0.7"/>
<path d="M600,588 L605,575 L615.7,569.5" fill="none" stroke="#1e1d1b" stroke-width="0.6"/>
<circle cx="963" cy="477" r="2" fill="#111"/>
<path d="M730.4,395 C738,385 748,380.4 765.8,381.5 L876,415 L878,423 L862,432 L750,401 Z" fill="#6c463d" stroke="#1e1d1b" stroke-width="0.6"/>
<path d="M765.8,381.5 L876,415 L874,419 L764,386 Z" fill="#8a5f55"/>
<path d="M762,382 L752,400" stroke="#1e1d1b" stroke-width="0.5"/>
<path d="M796,434 C797,426 804,423 812,425 L816,433 Z" fill="#6c463d" stroke="#1e1d1b" stroke-width="0.5"/>
<path d="M613,538 L637,425 C641,410 652,391 672,387.2 L706.5,388.7 L795,421 L796,426 L776,437.7 C740,455 700,480 680,498.7 C655,520 636,535 626,540.6 Z" fill="#6c463d" stroke="#1e1d1b" stroke-width="0.7"/>
<path d="M686.7,389.3 L795,421 L779.4,426.25 L684.6,395 Z" fill="#a88a80"/>
<path d="M621,537 L643,430 C647,415 657,400 672,396 L684.6,395" fill="none" stroke="#4a2a24" stroke-width="0.6"/>
<path d="M655.4,432.5 C657,418 664,410 672,409.6 L702.3,420 C703,440 700,455 695,463 C690,468 683,468 675,465 L652,456 C650,448 652,440 655.4,432.5 Z" fill="#353431" stroke="#1e1d1b" stroke-width="0.6"/>
<ellipse cx="676" cy="436" rx="10" ry="11" fill="url(#holeG2)" stroke="#1a1a18" stroke-width="0.5"/><ellipse cx="682.5" cy="437" rx="4.3" ry="8.2" fill="#fff"/>
<path d="M1155,576.8 C1156,568 1160,562 1178.6,557.6 L1270,588 C1288,594 1296,602 1296,620 L1260,767 L1241,767 C1225,710 1205,650 1180,620 Z" fill="#6c463d" stroke="#1e1d1b" stroke-width="0.7"/>
<path d="M1165,559.5 L1178.6,557.6 L1268,587.5 L1262,591 L1160,564 Z" fill="#94716a"/>
<path d="M1262,590 C1285,597 1294,610 1292,630 L1262,765 L1253,765 L1281,635 C1283,615 1278,603 1262,597 Z" fill="#7a4d43"/>
<path d="M1262,597 C1278,603 1283,615 1281,635 L1253,767" fill="none" stroke="#3a211c" stroke-width="0.6"/><path d="M1252,593 L1262,590" stroke="#3a211c" stroke-width="0.5"/>
<path d="M1224,606 C1240,611 1254,615 1262,622 C1264,640 1261,660 1256,676 C1240,673 1226,665 1218,650 C1214,635 1215,617 1224,606 Z" fill="#353431" stroke="#1e1d1b" stroke-width="0.7"/>
<ellipse cx="1241" cy="639.5" rx="11" ry="12" fill="url(#holeG)" stroke="#1a1a18" stroke-width="0.6"/>
<path d="M1296,620 L1332,628 L1334,650 L1296,655 Z" fill="#2d2c29" stroke="#1a1a18" stroke-width="0.5"/>
<path d="M1298,614 L1325,616 L1325,622 L1298,622 Z M1298,653 L1330,650 L1330,658 L1298,660 Z" fill="#4a4945" stroke="#1a1a18" stroke-width="0.5"/>
<ellipse cx="1334" cy="636" rx="5" ry="9" fill="#f2f4e2" stroke="#1a1a18" stroke-width="0.5"/>
<path d="M1303,690 a5,9 0 0 0 0,18 h26 a5,9 0 0 0 0,-18 z" fill="#6c463d" stroke="#1e1d1b" stroke-width="0.5"/><path d="M1303,690 a5,9 0 0 1 0,18" fill="none" stroke="#1e1d1b" stroke-width="0.5"/>
<path d="M1238.7,557 L1336.5,585.5 C1352,590 1363,602 1365,618 C1366,630 1364,640 1362,650 L1341,764.6 L1324.6,762 L1343.6,650 C1346,630 1340,612 1331.7,604.8 L1238,575 Z" fill="#6c463d" stroke="#1e1d1b" stroke-width="0.7"/>
<path d="M1238.7,557 L1336.5,585.5 L1330,590 L1238,563 Z" fill="#8a5f55"/>
<path d="M1336,586 L1330,604" stroke="#1e1d1b" stroke-width="0.5"/>
<path d="M702,303 C702,297 706,293 712,291 C780,272 880,260 960,260.4 C1041,261 1122,271 1201,288.6 C1206,290 1208,292 1208,294 C1208,296 1207,297 1205,298 L1182.4,304.8 C1179,306 1179,309 1182.4,310.5 C1180,311 1179,313 1184.3,318 L1254,343 C1260,345 1270,345 1275,341 L1298.7,328.6 C1303,326 1312,326 1318.7,329.6 C1390,360 1430,410 1442,470 C1446,500 1440,525 1425,540 C1415,549 1400,552 1384,551 L1348,541 L710,309 Z" fill="#74ade9" stroke="#2a6dc4" stroke-width="1"/>
<path d="M790,339 C900,325 1050,322 1180,345 C1290,370 1370,430 1415,520 C1405,545 1395,551 1384,551 L1348,541 L790,339 Z" fill="#4d958e" fill-opacity="0.2"/>
<path d="M813,335 C900,326 1000,323 1110,334 C1220,350 1320,400 1380,470 C1400,495 1410,520 1415,535" fill="none" stroke="#2a5fa6" stroke-width="0.5" opacity="0.8"/>
<path d="M712,286 L712,292.5" stroke="#8a9070" stroke-width="0.8"/>
<path d="M702,303 L710,309 L1384,551 M709,300.5 L1388,542 M709,300.5 L709.5,309" fill="none" stroke="#2a6dc4" stroke-width="0.8"/>
<path d="M1384,551 L1386,544 M1422,535 L1425,528" stroke="#2a6dc4" stroke-width="0.6"/>
<path d="M722,301 C800,280 900,272 980,272 C1080,274 1150,283 1195,293" fill="none" stroke="#4a78d0" stroke-width="0.6" stroke-dasharray="3 2" opacity="0.8"/>
<path d="M1308,334 C1380,365 1425,420 1432,480 C1435,505 1425,530 1400,545" fill="none" stroke="#4a78d0" stroke-width="0.6" stroke-dasharray="3 2" opacity="0.8"/>
<path d="M1180.5,310.5 L1254,335.3 L1270,335.3 L1294,322 C1300,319 1304,318 1307,318 L1330,327.7 L1318.7,329.6 C1312,326 1303,326 1298.7,328.6 L1275,341 C1270,345 1260,345 1254,343 L1184.3,318 C1179,313 1179,311 1180.5,310.5 Z" fill="#f1f3cf" stroke="#2a6dc4" stroke-width="0.7"/>
<path d="M1180.5,310.5 L1254,335.3 L1270,335.3 L1294,322 C1300,319 1304,318 1307,318" fill="none" stroke="#222" stroke-width="0.6"/>
<path d="M1201.5,280 L1201.5,287" stroke="#555" stroke-width="0.7"/>
<path d="M1205,288.6 C1208,290 1209,295 1206,297 L1182.4,304.8 C1179,306 1179,309 1182.4,310.5 L1184,305 L1205,296 Z" fill="#5b93d2" stroke="#2a6dc4" stroke-width="0.6"/>
<path d="M1214.8,292 L1306,324" stroke="#555" stroke-width="0.8" stroke-dasharray="3 2.5"/>
<path d="M1208,297.6 L1288,324.8" stroke="#c6c6f0" stroke-width="0.8" stroke-dasharray="3 2.5"/>
<path d="M1264,307 L1220.5,331.5" stroke="#1a1a1a" stroke-width="1"/>
<path d="M1220.5,331.5 L1043,432" stroke="#2a6dc4" stroke-width="0.9"/>
<path d="M1198,325 L1160,345 L1215,370 L1250,350" fill="none" stroke="#2a5fa6" stroke-width="0.6" stroke-dasharray="3 2" opacity="0.8"/>
<ellipse cx="1218" cy="366" rx="14" ry="5" fill="none" stroke="#2a5fa6" stroke-width="0.5" opacity="0.7"/>
<path d="M854,326 L859,317 L895,317 L900,326 L900,350 L889,362 L865,362 L854,352 Z" fill="#4f8ac9" stroke="#2a6dc4" stroke-width="0.6"/>
<path d="M862,332 V360 M885,333 V362" stroke="#2f6fbf" stroke-width="0.5"/>
<rect x="867" y="288" width="20" height="27" fill="#5893d4"/><ellipse cx="877" cy="288" rx="10" ry="4.5" fill="#5c96d6" stroke="#2a6dc4" stroke-width="0.6"/>
<path d="M867,288 V315 M887,288 V315" stroke="#2a6dc4" stroke-width="0.6"/>
<path d="M867,295 q10,3 20,0" fill="none" stroke="#3f7fc8" stroke-width="0.55"/>
<path d="M867,298 q10,3 20,0" fill="none" stroke="#3f7fc8" stroke-width="0.55"/>
<path d="M867,301 q10,3 20,0" fill="none" stroke="#3f7fc8" stroke-width="0.55"/>
<path d="M867,304 q10,3 20,0" fill="none" stroke="#3f7fc8" stroke-width="0.55"/>
<path d="M867,307 q10,3 20,0" fill="none" stroke="#3f7fc8" stroke-width="0.55"/>
<path d="M867,310 q10,3 20,0" fill="none" stroke="#3f7fc8" stroke-width="0.55"/>
<path d="M867,313 q10,3 20,0" fill="none" stroke="#3f7fc8" stroke-width="0.55"/>
<ellipse cx="877" cy="316" rx="11" ry="4" fill="#5c96d6" stroke="#2a6dc4" stroke-width="0.6"/>
<ellipse cx="877" cy="326" rx="11" ry="5.5" fill="#d8d9bf" stroke="#e03a3a" stroke-width="1.4"/><circle cx="877" cy="326" r="2.2" fill="#8a8a80"/>
<circle cx="854" cy="326" r="2.2" fill="#4f7ee8" stroke="#2846c0" stroke-width="0.6"/>
<circle cx="861" cy="335" r="2.2" fill="#4f7ee8" stroke="#2846c0" stroke-width="0.6"/>
<circle cx="893" cy="335" r="2.2" fill="#4f7ee8" stroke="#2846c0" stroke-width="0.6"/>
<circle cx="900" cy="326" r="2.2" fill="#4f7ee8" stroke="#2846c0" stroke-width="0.6"/>
<circle cx="862" cy="318" r="2.2" fill="#4f7ee8" stroke="#2846c0" stroke-width="0.6"/>
<circle cx="892" cy="318" r="2.2" fill="#4f7ee8" stroke="#2846c0" stroke-width="0.6"/>
<path d="M1075,326 L1080,317 L1116,317 L1121,326 L1121,350 L1110,362 L1086,362 L1075,352 Z" fill="#4f8ac9" stroke="#2a6dc4" stroke-width="0.6"/>
<path d="M1083,332 V360 M1106,333 V362" stroke="#2f6fbf" stroke-width="0.5"/>
<rect x="1088" y="288" width="20" height="27" fill="#5893d4"/><ellipse cx="1098" cy="288" rx="10" ry="4.5" fill="#5c96d6" stroke="#2a6dc4" stroke-width="0.6"/>
<path d="M1088,288 V315 M1108,288 V315" stroke="#2a6dc4" stroke-width="0.6"/>
<path d="M1088,295 q10,3 20,0" fill="none" stroke="#3f7fc8" stroke-width="0.55"/>
<path d="M1088,298 q10,3 20,0" fill="none" stroke="#3f7fc8" stroke-width="0.55"/>
<path d="M1088,301 q10,3 20,0" fill="none" stroke="#3f7fc8" stroke-width="0.55"/>
<path d="M1088,304 q10,3 20,0" fill="none" stroke="#3f7fc8" stroke-width="0.55"/>
<path d="M1088,307 q10,3 20,0" fill="none" stroke="#3f7fc8" stroke-width="0.55"/>
<path d="M1088,310 q10,3 20,0" fill="none" stroke="#3f7fc8" stroke-width="0.55"/>
<path d="M1088,313 q10,3 20,0" fill="none" stroke="#3f7fc8" stroke-width="0.55"/>
<ellipse cx="1098" cy="316" rx="11" ry="4" fill="#5c96d6" stroke="#2a6dc4" stroke-width="0.6"/>
<ellipse cx="1098" cy="326" rx="11" ry="5.5" fill="#d8d9bf" stroke="#e03a3a" stroke-width="1.4"/><circle cx="1098" cy="326" r="2.2" fill="#8a8a80"/>
<circle cx="1075" cy="326" r="2.2" fill="#4f7ee8" stroke="#2846c0" stroke-width="0.6"/>
<circle cx="1082" cy="335" r="2.2" fill="#4f7ee8" stroke="#2846c0" stroke-width="0.6"/>
<circle cx="1114" cy="335" r="2.2" fill="#4f7ee8" stroke="#2846c0" stroke-width="0.6"/>
<circle cx="1121" cy="326" r="2.2" fill="#4f7ee8" stroke="#2846c0" stroke-width="0.6"/>
<circle cx="1083" cy="318" r="2.2" fill="#4f7ee8" stroke="#2846c0" stroke-width="0.6"/>
<circle cx="1113" cy="318" r="2.2" fill="#4f7ee8" stroke="#2846c0" stroke-width="0.6"/>
<path d="M1237,384 L1242,375 L1278,375 L1283,384 L1283,408 L1272,420 L1248,420 L1237,410 Z" fill="#4f8ac9" stroke="#2a6dc4" stroke-width="0.6"/>
<path d="M1245,390 V418 M1268,391 V420" stroke="#2f6fbf" stroke-width="0.5"/>
<rect x="1250" y="346" width="20" height="27" fill="#5893d4"/><ellipse cx="1260" cy="346" rx="10" ry="4.5" fill="#5c96d6" stroke="#2a6dc4" stroke-width="0.6"/>
<path d="M1250,346 V373 M1270,346 V373" stroke="#2a6dc4" stroke-width="0.6"/>
<path d="M1250,353 q10,3 20,0" fill="none" stroke="#3f7fc8" stroke-width="0.55"/>
<path d="M1250,356 q10,3 20,0" fill="none" stroke="#3f7fc8" stroke-width="0.55"/>
<path d="M1250,359 q10,3 20,0" fill="none" stroke="#3f7fc8" stroke-width="0.55"/>
<path d="M1250,362 q10,3 20,0" fill="none" stroke="#3f7fc8" stroke-width="0.55"/>
<path d="M1250,365 q10,3 20,0" fill="none" stroke="#3f7fc8" stroke-width="0.55"/>
<path d="M1250,368 q10,3 20,0" fill="none" stroke="#3f7fc8" stroke-width="0.55"/>
<path d="M1250,371 q10,3 20,0" fill="none" stroke="#3f7fc8" stroke-width="0.55"/>
<ellipse cx="1260" cy="374" rx="11" ry="4" fill="#5c96d6" stroke="#2a6dc4" stroke-width="0.6"/>
<ellipse cx="1260" cy="384" rx="11" ry="5.5" fill="#d8d9bf" stroke="#e03a3a" stroke-width="1.4"/><circle cx="1260" cy="384" r="2.2" fill="#8a8a80"/>
<circle cx="1237" cy="384" r="2.2" fill="#4f7ee8" stroke="#2846c0" stroke-width="0.6"/>
<circle cx="1244" cy="393" r="2.2" fill="#4f7ee8" stroke="#2846c0" stroke-width="0.6"/>
<circle cx="1276" cy="393" r="2.2" fill="#4f7ee8" stroke="#2846c0" stroke-width="0.6"/>
<circle cx="1283" cy="384" r="2.2" fill="#4f7ee8" stroke="#2846c0" stroke-width="0.6"/>
<circle cx="1245" cy="376" r="2.2" fill="#4f7ee8" stroke="#2846c0" stroke-width="0.6"/>
<circle cx="1275" cy="376" r="2.2" fill="#4f7ee8" stroke="#2846c0" stroke-width="0.6"/>
<path d="M1284,481 L1289,472 L1325,472 L1330,481 L1330,505 L1319,517 L1295,517 L1284,507 Z" fill="#4f8ac9" stroke="#2a6dc4" stroke-width="0.6"/>
<path d="M1292,487 V515 M1315,488 V517" stroke="#2f6fbf" stroke-width="0.5"/>
<rect x="1297" y="443" width="20" height="27" fill="#5893d4"/><ellipse cx="1307" cy="443" rx="10" ry="4.5" fill="#5c96d6" stroke="#2a6dc4" stroke-width="0.6"/>
<path d="M1297,443 V470 M1317,443 V470" stroke="#2a6dc4" stroke-width="0.6"/>
<path d="M1297,450 q10,3 20,0" fill="none" stroke="#3f7fc8" stroke-width="0.55"/>
<path d="M1297,453 q10,3 20,0" fill="none" stroke="#3f7fc8" stroke-width="0.55"/>
<path d="M1297,456 q10,3 20,0" fill="none" stroke="#3f7fc8" stroke-width="0.55"/>
<path d="M1297,459 q10,3 20,0" fill="none" stroke="#3f7fc8" stroke-width="0.55"/>
<path d="M1297,462 q10,3 20,0" fill="none" stroke="#3f7fc8" stroke-width="0.55"/>
<path d="M1297,465 q10,3 20,0" fill="none" stroke="#3f7fc8" stroke-width="0.55"/>
<path d="M1297,468 q10,3 20,0" fill="none" stroke="#3f7fc8" stroke-width="0.55"/>
<ellipse cx="1307" cy="471" rx="11" ry="4" fill="#5c96d6" stroke="#2a6dc4" stroke-width="0.6"/>
<ellipse cx="1307" cy="481" rx="11" ry="5.5" fill="#d8d9bf" stroke="#e03a3a" stroke-width="1.4"/><circle cx="1307" cy="481" r="2.2" fill="#8a8a80"/>
<circle cx="1284" cy="481" r="2.2" fill="#4f7ee8" stroke="#2846c0" stroke-width="0.6"/>
<circle cx="1291" cy="490" r="2.2" fill="#4f7ee8" stroke="#2846c0" stroke-width="0.6"/>
<circle cx="1323" cy="490" r="2.2" fill="#4f7ee8" stroke="#2846c0" stroke-width="0.6"/>
<circle cx="1330" cy="481" r="2.2" fill="#4f7ee8" stroke="#2846c0" stroke-width="0.6"/>
<circle cx="1292" cy="473" r="2.2" fill="#4f7ee8" stroke="#2846c0" stroke-width="0.6"/>
<circle cx="1322" cy="473" r="2.2" fill="#4f7ee8" stroke="#2846c0" stroke-width="0.6"/>
<path d="M1157,367 v-28" stroke="#2ea0e0" stroke-width="1.8"/><path d="M1154,339.5 l3,-9 l3,9z" fill="#2ea0e0"/>
<path d="M1157,367 l22,-12" stroke="#3cb55a" stroke-width="1.6"/>
<path d="M1157,367 l26,9" stroke="#d43b3b" stroke-width="1.9"/><path d="M1181,372.5 l9.5,5 l-11,1.5z" fill="#d43b3b"/>
<circle cx="1157" cy="367" r="1.8" fill="#fff" stroke="#999" stroke-width="0.5"/>
<path d="M693,303 L702,299 M693,303 L702,306" stroke="#777" stroke-width="0.6"/>
<circle cx="693" cy="303" r="2" fill="#111"/>
<circle cx="722.6" cy="302.5" r="2" fill="#1d4e9a"/>
<circle cx="1195" cy="293.8" r="2" fill="#1d4e9a"/>
<circle cx="1193.4" cy="314.8" r="2" fill="#222"/>
<circle cx="1263.4" cy="339.6" r="2" fill="#222"/>
<circle cx="1215" cy="334.3" r="2" fill="#1d4e9a"/>
<circle cx="1307.7" cy="334.3" r="2" fill="#1d4e9a"/>
<circle cx="1396" cy="543" r="2" fill="#1d4e9a"/>
<circle cx="705.6" cy="303.8" r="2.3" fill="none" stroke="#4a6fd8" stroke-width="0.6"/>
<circle cx="774" cy="324" r="2.3" fill="none" stroke="#4a6fd8" stroke-width="0.6"/>
<circle cx="1335" cy="525" r="2.3" fill="none" stroke="#4a6fd8" stroke-width="0.6"/>
<circle cx="1396" cy="548" r="2.3" fill="none" stroke="#4a6fd8" stroke-width="0.6"/>
<path d="M1557.7,261.2 C1660,325 1720,400 1721,472 C1722,560 1620,660 1476,729 C1450,740 1420,752 1386.4,758.4" fill="none" stroke="#c0c0ea" stroke-width="0.9" stroke-dasharray="4 3"/>
<circle cx="1557.7" cy="261.2" r="2.3" fill="none" stroke="#9a80d8" stroke-width="0.8"/><circle cx="1386.4" cy="758.4" r="2.3" fill="none" stroke="#9a80d8" stroke-width="0.8"/>
</g>
<rect x="30" y="771" width="1860" height="5.5" fill="#e6e6e6"/>
<rect x="32" y="771.6" width="1545" height="4.4" rx="2.2" fill="#c6c6c6"/>
<rect x="30" y="776.5" width="1860" height="22.5" fill="#f0f0f0"/>
<path d="M37,781.5 v7.5 M43.5,781.5 v7.5 l-5.5,-3.75z" stroke="#555" stroke-width="1" fill="#555"/>
<path d="M51,785.2 l5,-3.7 v7.4z" fill="#555"/><rect x="56" y="784" width="2" height="2.5" fill="#555"/>
<path d="M64,781.3 l6,4 l-6,4z" fill="#555"/>
<rect x="77" y="784" width="2" height="2.5" fill="#555"/><path d="M79,781.5 l5,3.7 l-5,3.7z" fill="#555"/>
<path d="M92,781.5 l5.5,3.75 l-5.5,3.75z M98,781.5 v7.5" stroke="#555" stroke-width="1" fill="#555"/>
<path d="M115,793.8 H1860" stroke="#cfcfcf" stroke-width="0.7"/>
<path d="M115.3,791.5 v2.3" stroke="#cfcfcf" stroke-width="0.7"/>
<rect x="111.3" y="781.3" width="8" height="8" rx="2" fill="#e6e6e6" stroke="#888" stroke-width="0.7"/><path d="M113.3,786.3 q2,-4 4,-2" stroke="#888" stroke-width="0.6" fill="none"/>
<path d="M128.5,791.5 v2.3" stroke="#cfcfcf" stroke-width="0.7"/>
<path d="M124.53,789.3 l3,-3 M126.53,783.3 l4,4 M128.53,781.3 l4,4" stroke="#e8904a" stroke-width="1.6"/>
<path d="M141.8,791.5 v2.3" stroke="#cfcfcf" stroke-width="0.7"/>
<circle cx="141.26" cy="785.8" r="3.7" fill="#e9e9e9" stroke="#999" stroke-width="0.6"/><circle cx="144.26" cy="782.8" r="1.6" fill="#f5a623"/>
<path d="M155.0,791.5 v2.3" stroke="#cfcfcf" stroke-width="0.7"/>
<rect x="150.99" y="781.3" width="7.5" height="7.5" fill="none" stroke="#3a8fd8" stroke-width="0.7" stroke-dasharray="1.2 0.8"/><path d="M155.99,789.3 l3,-3" stroke="#f5a623" stroke-width="1"/>
<path d="M168.2,791.5 v2.3" stroke="#cfcfcf" stroke-width="0.7"/>
<rect x="164.22" y="781.3" width="7" height="8" fill="#4d9de2"/><path d="M171.22,781.3 l1.5,-1 v8 l-1.5,1z" fill="#2f7bc0"/><rect x="164.22" y="788.3" width="7" height="1.2" fill="#bbb"/>
<path d="M181.4,791.5 v2.3" stroke="#cfcfcf" stroke-width="0.7"/>
<rect x="177.45" y="781.3" width="7" height="8" fill="#4d9de2"/><path d="M184.45,781.3 l1.5,-1 v8 l-1.5,1z" fill="#2f7bc0"/><rect x="177.45" y="788.3" width="7" height="1.2" fill="#bbb"/>
<path d="M194.7,791.5 v2.3" stroke="#cfcfcf" stroke-width="0.7"/>
<rect x="190.68" y="781.3" width="8" height="8" rx="2" fill="#e6e6e6" stroke="#888" stroke-width="0.7"/><path d="M192.68,786.3 q2,-4 4,-2" stroke="#888" stroke-width="0.6" fill="none"/>
<path d="M207.9,791.5 v2.3" stroke="#cfcfcf" stroke-width="0.7"/>
<path d="M203.91,789.3 v-6 l2,-2 l2,3 l2,-3 l2,2 v6 l-2,-2 v-3 l-2,2 l-2,-2 v3z" fill="#d4d4d4" stroke="#888" stroke-width="0.6"/>
<path d="M221.1,791.5 v2.3" stroke="#cfcfcf" stroke-width="0.7"/>
<path d="M217.14,789.3 v-6 l2,-2 l2,3 l2,-3 l2,2 v6 l-2,-2 v-3 l-2,2 l-2,-2 v3z" fill="#d4d4d4" stroke="#888" stroke-width="0.6"/>
<path d="M234.4,791.5 v2.3" stroke="#cfcfcf" stroke-width="0.7"/>
<rect x="230.37" y="781.3" width="7.5" height="7.5" fill="none" stroke="#3a8fd8" stroke-width="0.7" stroke-dasharray="1.2 0.8"/><path d="M235.37,789.3 l3,-3" stroke="#f5a623" stroke-width="1"/>
<path d="M247.6,791.5 v2.3" stroke="#cfcfcf" stroke-width="0.7"/>
<rect x="243.60000000000002" y="781.3" width="8" height="8" rx="1" fill="#e6e6e6" stroke="#888" stroke-width="0.7"/><circle cx="247.60000000000002" cy="785.3" r="2.3" fill="#7fb6e6" stroke="#666" stroke-width="0.5"/>
<path d="M260.8,791.5 v2.3" stroke="#cfcfcf" stroke-width="0.7"/>
<circle cx="260.33" cy="785.8" r="3.7" fill="#e9e9e9" stroke="#999" stroke-width="0.6"/><circle cx="263.33" cy="782.8" r="1.6" fill="#f5a623"/>
<path d="M274.1,791.5 v2.3" stroke="#cfcfcf" stroke-width="0.7"/>
<path d="M271.06,783.3 a3,3 0 1 1 5,2 l2,3 h-8z" fill="#5a9de0" stroke="#3366aa" stroke-width="0.5"/>
<path d="M287.3,791.5 v2.3" stroke="#cfcfcf" stroke-width="0.7"/>
<path d="M283.29,789.3 v-6 l2,-2 l2,3 l2,-3 l2,2 v6 l-2,-2 v-3 l-2,2 l-2,-2 v3z" fill="#d4d4d4" stroke="#888" stroke-width="0.6"/>
<path d="M300.5,791.5 v2.3" stroke="#cfcfcf" stroke-width="0.7"/>
<rect x="296.52" y="781.3" width="3.5" height="3.5" fill="#fff" stroke="#777" stroke-width="0.6"/><rect x="301.02" y="785.8" width="3.5" height="3.5" fill="#fff" stroke="#777" stroke-width="0.6"/><path d="M298.52,785.3 v2 h2" stroke="#777" stroke-width="0.5" fill="none"/>
<path d="M313.8,791.5 v2.3" stroke="#cfcfcf" stroke-width="0.7"/>
<path d="M309.75,789.3 v-6 l2,-2 l2,3 l2,-3 l2,2 v6 l-2,-2 v-3 l-2,2 l-2,-2 v3z" fill="#d4d4d4" stroke="#888" stroke-width="0.6"/>
<path d="M327.0,791.5 v2.3" stroke="#cfcfcf" stroke-width="0.7"/>
<rect x="322.98" y="781.3" width="3.5" height="3.5" fill="#fff" stroke="#777" stroke-width="0.6"/><rect x="327.48" y="785.8" width="3.5" height="3.5" fill="#fff" stroke="#777" stroke-width="0.6"/><path d="M324.98,785.3 v2 h2" stroke="#777" stroke-width="0.5" fill="none"/>
<path d="M340.2,791.5 v2.3" stroke="#cfcfcf" stroke-width="0.7"/>
<path d="M336.21,789.3 v-6 l2,-2 l2,3 l2,-3 l2,2 v6 l-2,-2 v-3 l-2,2 l-2,-2 v3z" fill="#d4d4d4" stroke="#888" stroke-width="0.6"/>
<path d="M353.4,791.5 v2.3" stroke="#cfcfcf" stroke-width="0.7"/>
<rect x="349.44" y="781.3" width="3.5" height="3.5" fill="#fff" stroke="#777" stroke-width="0.6"/><rect x="353.94" y="785.8" width="3.5" height="3.5" fill="#fff" stroke="#777" stroke-width="0.6"/><path d="M351.44,785.3 v2 h2" stroke="#777" stroke-width="0.5" fill="none"/>
<path d="M366.7,791.5 v2.3" stroke="#cfcfcf" stroke-width="0.7"/>
<path d="M362.67,789.3 v-6 l2,-2 l2,3 l2,-3 l2,2 v6 l-2,-2 v-3 l-2,2 l-2,-2 v3z" fill="#d4d4d4" stroke="#888" stroke-width="0.6"/>
<path d="M379.9,791.5 v2.3" stroke="#cfcfcf" stroke-width="0.7"/>
<circle cx="378.90000000000003" cy="784.3" r="2.5" fill="#fff" stroke="#888" stroke-width="0.6"/><circle cx="381.40000000000003" cy="786.8" r="2.5" fill="#fff" stroke="#888" stroke-width="0.6"/><path d="M375.90000000000003,787.3 l3,2" stroke="#d33" stroke-width="1"/>
<path d="M393.1,791.5 v2.3" stroke="#cfcfcf" stroke-width="0.7"/>
<circle cx="392.13" cy="784.3" r="2.5" fill="#fff" stroke="#888" stroke-width="0.6"/><circle cx="394.63" cy="786.8" r="2.5" fill="#fff" stroke="#888" stroke-width="0.6"/><path d="M389.13,787.3 l3,2" stroke="#d33" stroke-width="1"/>
<path d="M406.4,791.5 v2.3" stroke="#cfcfcf" stroke-width="0.7"/>
<circle cx="405.36" cy="784.3" r="2.5" fill="#fff" stroke="#888" stroke-width="0.6"/><circle cx="407.86" cy="786.8" r="2.5" fill="#fff" stroke="#888" stroke-width="0.6"/><path d="M402.36,787.3 l3,2" stroke="#d33" stroke-width="1"/>
<path d="M419.6,791.5 v2.3" stroke="#cfcfcf" stroke-width="0.7"/>
<circle cx="418.59000000000003" cy="784.3" r="2.5" fill="#fff" stroke="#888" stroke-width="0.6"/><circle cx="421.09000000000003" cy="786.8" r="2.5" fill="#fff" stroke="#888" stroke-width="0.6"/><path d="M415.59000000000003,787.3 l3,2" stroke="#d33" stroke-width="1"/>
<path d="M431.7,791.5 v2.3" stroke="#cfcfcf" stroke-width="0.7"/>
<rect x="427.7" y="781.3" width="7.5" height="7.5" fill="none" stroke="#3a8fd8" stroke-width="0.7" stroke-dasharray="1.2 0.8"/><path d="M432.7,789.3 l3,-3" stroke="#f5a623" stroke-width="1"/>
<path d="M445.0,791.5 v2.3" stroke="#cfcfcf" stroke-width="0.7"/>
<rect x="441" y="781.3" width="7" height="8" fill="#4d9de2"/><path d="M448,781.3 l1.5,-1 v8 l-1.5,1z" fill="#2f7bc0"/><rect x="441" y="788.3" width="7" height="1.2" fill="#bbb"/>
<path d="M458.3,791.5 v2.3" stroke="#cfcfcf" stroke-width="0.7"/>
<rect x="454.3" y="781.3" width="8" height="8" rx="1" fill="#e6e6e6" stroke="#888" stroke-width="0.7"/><circle cx="458.3" cy="785.3" r="2.3" fill="#7fb6e6" stroke="#666" stroke-width="0.5"/>
<path d="M471.7,791.5 v2.3" stroke="#cfcfcf" stroke-width="0.7"/>
<rect x="467.7" y="781.3" width="7.5" height="7.5" fill="none" stroke="#3a8fd8" stroke-width="0.7" stroke-dasharray="1.2 0.8"/><path d="M472.7,789.3 l3,-3" stroke="#f5a623" stroke-width="1"/>
<path d="M485.0,791.5 v2.3" stroke="#cfcfcf" stroke-width="0.7"/>
<rect x="481" y="781.3" width="7" height="8" fill="#4d9de2"/><path d="M488,781.3 l1.5,-1 v8 l-1.5,1z" fill="#2f7bc0"/><rect x="481" y="788.3" width="7" height="1.2" fill="#bbb"/>
<path d="M498.3,791.5 v2.3" stroke="#cfcfcf" stroke-width="0.7"/>
<path d="M494.3,789.3 v-4 a4,4 0 0 1 4,-4 h4 v8z" fill="#e6e6e6" stroke="#888" stroke-width="0.6"/>
<path d="M510.8,791.5 v2.3" stroke="#cfcfcf" stroke-width="0.7"/>
<rect x="506.8" y="781.3" width="7.5" height="7.5" fill="none" stroke="#3a8fd8" stroke-width="0.7" stroke-dasharray="1.2 0.8"/><path d="M511.8,789.3 l3,-3" stroke="#f5a623" stroke-width="1"/>
<path d="M524.2,791.5 v2.3" stroke="#cfcfcf" stroke-width="0.7"/>
<circle cx="523.7" cy="785.8" r="3.7" fill="#e9e9e9" stroke="#999" stroke-width="0.6"/><circle cx="526.7" cy="782.8" r="1.6" fill="#f5a623"/>
<path d="M537.5,791.5 v2.3" stroke="#cfcfcf" stroke-width="0.7"/>
<path d="M533.0,787.3 q0,-5 4.5,-5 q4.5,0 4.5,5 z" fill="#4d9de2"/><circle cx="535.0" cy="787.8" r="1.3" fill="#2f6fb0"/><circle cx="540.0" cy="787.8" r="1.3" fill="#2f6fb0"/>
<path d="M550.8,791.5 v2.3" stroke="#cfcfcf" stroke-width="0.7"/>
<path d="M546.8,789.3 v-6 l2,-2 l2,3 l2,-3 l2,2 v6 l-2,-2 v-3 l-2,2 l-2,-2 v3z" fill="#d4d4d4" stroke="#888" stroke-width="0.6"/>
<path d="M564.2,791.5 v2.3" stroke="#cfcfcf" stroke-width="0.7"/>
<rect x="560.2" y="781.3" width="7.5" height="7.5" fill="none" stroke="#3a8fd8" stroke-width="0.7" stroke-dasharray="1.2 0.8"/><path d="M565.2,789.3 l3,-3" stroke="#f5a623" stroke-width="1"/>
<path d="M577.5,791.5 v2.3" stroke="#cfcfcf" stroke-width="0.7"/>
<rect x="573.5" y="781.3" width="8" height="8" rx="1" fill="#e6e6e6" stroke="#888" stroke-width="0.7"/><circle cx="577.5" cy="785.3" r="2.3" fill="#7fb6e6" stroke="#666" stroke-width="0.5"/>
<path d="M590.8,791.5 v2.3" stroke="#cfcfcf" stroke-width="0.7"/>
<circle cx="590.8" cy="785.3" r="3.6" fill="none" stroke="#3a8fd8" stroke-width="1.3" stroke-dasharray="1.3 1.5"/>
<path d="M603.3,791.5 v2.3" stroke="#cfcfcf" stroke-width="0.7"/>
<path d="M599.3,789.3 v-4 a4,4 0 0 1 4,-4 h4 v8z" fill="#e6e6e6" stroke="#888" stroke-width="0.6"/>
<path d="M616.7,791.5 v2.3" stroke="#cfcfcf" stroke-width="0.7"/>
<rect x="612.7" y="781.3" width="7.5" height="7.5" fill="none" stroke="#3a8fd8" stroke-width="0.7" stroke-dasharray="1.2 0.8"/><path d="M617.7,789.3 l3,-3" stroke="#f5a623" stroke-width="1"/>
<path d="M630.0,791.5 v2.3" stroke="#cfcfcf" stroke-width="0.7"/>
<path d="M625.5,787.3 q0,-5 4.5,-5 q4.5,0 4.5,5 z" fill="#4d9de2"/><circle cx="627.5" cy="787.8" r="1.3" fill="#2f6fb0"/><circle cx="632.5" cy="787.8" r="1.3" fill="#2f6fb0"/>
<path d="M643.3,791.5 v2.3" stroke="#cfcfcf" stroke-width="0.7"/>
<path d="M638.8,787.3 q0,-5 4.5,-5 q4.5,0 4.5,5 z" fill="#4d9de2"/><circle cx="640.8" cy="787.8" r="1.3" fill="#2f6fb0"/><circle cx="645.8" cy="787.8" r="1.3" fill="#2f6fb0"/>
<path d="M656.7,791.5 v2.3" stroke="#cfcfcf" stroke-width="0.7"/>
<path d="M652.7,789.3 l4,-8 l4,8z" fill="#4d9de2" stroke="#555" stroke-width="0.5"/>
<path d="M669.2,791.5 v2.3" stroke="#cfcfcf" stroke-width="0.7"/>
<path d="M665.2,789.3 v-4 a4,4 0 0 1 4,-4 h4 v8z" fill="#e6e6e6" stroke="#888" stroke-width="0.6"/>
<path d="M682.5,791.5 v2.3" stroke="#cfcfcf" stroke-width="0.7"/>
<circle cx="682.5" cy="785.3" r="3.6" fill="none" stroke="#3a8fd8" stroke-width="1.3" stroke-dasharray="1.3 1.5"/>
<path d="M695.5,791.5 v2.3" stroke="#cfcfcf" stroke-width="0.7"/>
<path d="M692.5,783.3 a3,3 0 1 1 5,2 l2,3 h-8z" fill="#5a9de0" stroke="#3366aa" stroke-width="0.5"/>
<path d="M709.1,791.5 v2.3" stroke="#cfcfcf" stroke-width="0.7"/>
<path d="M705.1,789.3 v-6 l2,-2 l2,3 l2,-3 l2,2 v6 l-2,-2 v-3 l-2,2 l-2,-2 v3z" fill="#d4d4d4" stroke="#888" stroke-width="0.6"/>
<path d="M722.0,791.5 v2.3" stroke="#cfcfcf" stroke-width="0.7"/>
<rect x="718" y="781.3" width="3.5" height="3.5" fill="#fff" stroke="#777" stroke-width="0.6"/><rect x="722.5" y="785.8" width="3.5" height="3.5" fill="#fff" stroke="#777" stroke-width="0.6"/><path d="M720,785.3 v2 h2" stroke="#777" stroke-width="0.5" fill="none"/>
<path d="M735.8,791.5 v2.3" stroke="#cfcfcf" stroke-width="0.7"/>
<path d="M731.8,789.3 v-6 l2,-2 l2,3 l2,-3 l2,2 v6 l-2,-2 v-3 l-2,2 l-2,-2 v3z" fill="#d4d4d4" stroke="#888" stroke-width="0.6"/>
<path d="M749.0,791.5 v2.3" stroke="#cfcfcf" stroke-width="0.7"/>
<rect x="745" y="781.3" width="3.5" height="3.5" fill="#fff" stroke="#777" stroke-width="0.6"/><rect x="749.5" y="785.8" width="3.5" height="3.5" fill="#fff" stroke="#777" stroke-width="0.6"/><path d="M747,785.3 v2 h2" stroke="#777" stroke-width="0.5" fill="none"/>
<path d="M762.5,791.5 v2.3" stroke="#cfcfcf" stroke-width="0.7"/>
<path d="M758.5,789.3 v-6 l2,-2 l2,3 l2,-3 l2,2 v6 l-2,-2 v-3 l-2,2 l-2,-2 v3z" fill="#d4d4d4" stroke="#888" stroke-width="0.6"/>
<path d="M775.8,791.5 v2.3" stroke="#cfcfcf" stroke-width="0.7"/>
<rect x="771.8" y="781.3" width="3.5" height="3.5" fill="#fff" stroke="#777" stroke-width="0.6"/><rect x="776.3" y="785.8" width="3.5" height="3.5" fill="#fff" stroke="#777" stroke-width="0.6"/><path d="M773.8,785.3 v2 h2" stroke="#777" stroke-width="0.5" fill="none"/>
<path d="M788.3,791.5 v2.3" stroke="#cfcfcf" stroke-width="0.7"/>
<path d="M784.3,789.3 v-6 l2,-2 l2,3 l2,-3 l2,2 v6 l-2,-2 v-3 l-2,2 l-2,-2 v3z" fill="#d4d4d4" stroke="#888" stroke-width="0.6"/>
<path d="M801.7,791.5 v2.3" stroke="#cfcfcf" stroke-width="0.7"/>
<rect x="797.7" y="781.3" width="3.5" height="3.5" fill="#fff" stroke="#777" stroke-width="0.6"/><rect x="802.2" y="785.8" width="3.5" height="3.5" fill="#fff" stroke="#777" stroke-width="0.6"/><path d="M799.7,785.3 v2 h2" stroke="#777" stroke-width="0.5" fill="none"/>
<path d="M815.0,791.5 v2.3" stroke="#cfcfcf" stroke-width="0.7"/>
<path d="M811,789.3 v-6 l2,-2 l2,3 l2,-3 l2,2 v6 l-2,-2 v-3 l-2,2 l-2,-2 v3z" fill="#d4d4d4" stroke="#888" stroke-width="0.6"/>
<path d="M828.3,791.5 v2.3" stroke="#cfcfcf" stroke-width="0.7"/>
<rect x="824.3" y="781.3" width="3.5" height="3.5" fill="#fff" stroke="#777" stroke-width="0.6"/><rect x="828.8" y="785.8" width="3.5" height="3.5" fill="#fff" stroke="#777" stroke-width="0.6"/><path d="M826.3,785.3 v2 h2" stroke="#777" stroke-width="0.5" fill="none"/>
<path d="M841.7,791.5 v2.3" stroke="#cfcfcf" stroke-width="0.7"/>
<path d="M837.7,789.3 v-6 l2,-2 l2,3 l2,-3 l2,2 v6 l-2,-2 v-3 l-2,2 l-2,-2 v3z" fill="#d4d4d4" stroke="#888" stroke-width="0.6"/>
<path d="M854.2,791.5 v2.3" stroke="#cfcfcf" stroke-width="0.7"/>
<path d="M851.2,783.3 a3,3 0 1 1 5,2 l2,3 h-8z" fill="#5a9de0" stroke="#3366aa" stroke-width="0.5"/>
<path d="M867.5,791.5 v2.3" stroke="#cfcfcf" stroke-width="0.7"/>
<path d="M863.5,789.3 v-6 l2,-2 l2,3 l2,-3 l2,2 v6 l-2,-2 v-3 l-2,2 l-2,-2 v3z" fill="#d4d4d4" stroke="#888" stroke-width="0.6"/>
<path d="M880.8,791.5 v2.3" stroke="#cfcfcf" stroke-width="0.7"/>
<rect x="876.8" y="781.3" width="7.5" height="7.5" fill="none" stroke="#3a8fd8" stroke-width="0.7" stroke-dasharray="1.2 0.8"/><path d="M881.8,789.3 l3,-3" stroke="#f5a623" stroke-width="1"/>
<path d="M894.2,791.5 v2.3" stroke="#cfcfcf" stroke-width="0.7"/>
<rect x="890.2" y="781.3" width="7" height="8" fill="#4d9de2"/><path d="M897.2,781.3 l1.5,-1 v8 l-1.5,1z" fill="#2f7bc0"/><rect x="890.2" y="788.3" width="7" height="1.2" fill="#bbb"/>
<path d="M907.5,791.5 v2.3" stroke="#cfcfcf" stroke-width="0.7"/>
<path d="M903.5,789.3 v-4 a4,4 0 0 1 4,-4 h4 v8z" fill="#e6e6e6" stroke="#888" stroke-width="0.6"/>
<path d="M920.8,791.5 v2.3" stroke="#cfcfcf" stroke-width="0.7"/>
<rect x="916.8" y="781.3" width="3.5" height="3.5" fill="#fff" stroke="#777" stroke-width="0.6"/><rect x="921.3" y="785.8" width="3.5" height="3.5" fill="#fff" stroke="#777" stroke-width="0.6"/><path d="M918.8,785.3 v2 h2" stroke="#777" stroke-width="0.5" fill="none"/>
<path d="M934.2,791.5 v2.3" stroke="#cfcfcf" stroke-width="0.7"/>
<path d="M930.2,789.3 v-6 l2,-2 l2,3 l2,-3 l2,2 v6 l-2,-2 v-3 l-2,2 l-2,-2 v3z" fill="#d4d4d4" stroke="#888" stroke-width="0.6"/>
<path d="M947.5,791.5 v2.3" stroke="#cfcfcf" stroke-width="0.7"/>
<rect x="943.5" y="781.3" width="3.5" height="3.5" fill="#fff" stroke="#777" stroke-width="0.6"/><rect x="948.0" y="785.8" width="3.5" height="3.5" fill="#fff" stroke="#777" stroke-width="0.6"/><path d="M945.5,785.3 v2 h2" stroke="#777" stroke-width="0.5" fill="none"/>
<path d="M960.0,791.5 v2.3" stroke="#cfcfcf" stroke-width="0.7"/>
<path d="M956,789.3 v-6 l2,-2 l2,3 l2,-3 l2,2 v6 l-2,-2 v-3 l-2,2 l-2,-2 v3z" fill="#d4d4d4" stroke="#888" stroke-width="0.6"/>
<path d="M973.3,791.5 v2.3" stroke="#cfcfcf" stroke-width="0.7"/>
<rect x="969.3" y="781.3" width="3.5" height="3.5" fill="#fff" stroke="#777" stroke-width="0.6"/><rect x="973.8" y="785.8" width="3.5" height="3.5" fill="#fff" stroke="#777" stroke-width="0.6"/><path d="M971.3,785.3 v2 h2" stroke="#777" stroke-width="0.5" fill="none"/>
<path d="M986.7,791.5 v2.3" stroke="#cfcfcf" stroke-width="0.7"/>
<path d="M982.7,789.3 v-6 l2,-2 l2,3 l2,-3 l2,2 v6 l-2,-2 v-3 l-2,2 l-2,-2 v3z" fill="#d4d4d4" stroke="#888" stroke-width="0.6"/>
<path d="M999.2,791.5 v2.3" stroke="#cfcfcf" stroke-width="0.7"/>
<rect x="995.2" y="781.3" width="3.5" height="3.5" fill="#fff" stroke="#777" stroke-width="0.6"/><rect x="999.7" y="785.8" width="3.5" height="3.5" fill="#fff" stroke="#777" stroke-width="0.6"/><path d="M997.2,785.3 v2 h2" stroke="#777" stroke-width="0.5" fill="none"/>
<path d="M1012.5,791.5 v2.3" stroke="#cfcfcf" stroke-width="0.7"/>
<path d="M1008.5,789.3 v-6 l2,-2 l2,3 l2,-3 l2,2 v6 l-2,-2 v-3 l-2,2 l-2,-2 v3z" fill="#d4d4d4" stroke="#888" stroke-width="0.6"/>
<path d="M1025.8,791.5 v2.3" stroke="#cfcfcf" stroke-width="0.7"/>
<rect x="1021.8" y="781.3" width="3.5" height="3.5" fill="#fff" stroke="#777" stroke-width="0.6"/><rect x="1026.3" y="785.8" width="3.5" height="3.5" fill="#fff" stroke="#777" stroke-width="0.6"/><path d="M1023.8,785.3 v2 h2" stroke="#777" stroke-width="0.5" fill="none"/>
<path d="M1039.2,791.5 v2.3" stroke="#cfcfcf" stroke-width="0.7"/>
<path d="M1035.2,789.3 v-6 l2,-2 l2,3 l2,-3 l2,2 v6 l-2,-2 v-3 l-2,2 l-2,-2 v3z" fill="#d4d4d4" stroke="#888" stroke-width="0.6"/>
<path d="M1052.5,791.5 v2.3" stroke="#cfcfcf" stroke-width="0.7"/>
<rect x="1048.5" y="781.3" width="7.5" height="7.5" fill="none" stroke="#3a8fd8" stroke-width="0.7" stroke-dasharray="1.2 0.8"/><path d="M1053.5,789.3 l3,-3" stroke="#f5a623" stroke-width="1"/>
<path d="M1065.0,791.5 v2.3" stroke="#cfcfcf" stroke-width="0.7"/>
<path d="M1060.5,787.3 q0,-5 4.5,-5 q4.5,0 4.5,5 z" fill="#4d9de2"/><circle cx="1062.5" cy="787.8" r="1.3" fill="#2f6fb0"/><circle cx="1067.5" cy="787.8" r="1.3" fill="#2f6fb0"/>
<path d="M1078.3,791.5 v2.3" stroke="#cfcfcf" stroke-width="0.7"/>
<rect x="1074.3" y="781.3" width="7" height="8" fill="#4d9de2"/><path d="M1081.3,781.3 l1.5,-1 v8 l-1.5,1z" fill="#2f7bc0"/><rect x="1074.3" y="788.3" width="7" height="1.2" fill="#bbb"/>
<path d="M1091.7,791.5 v2.3" stroke="#cfcfcf" stroke-width="0.7"/>
<rect x="1087.7" y="781.3" width="7.5" height="7.5" fill="none" stroke="#3a8fd8" stroke-width="0.7" stroke-dasharray="1.2 0.8"/><path d="M1092.7,789.3 l3,-3" stroke="#f5a623" stroke-width="1"/>
<path d="M1105.0,791.5 v2.3" stroke="#cfcfcf" stroke-width="0.7"/>
<path d="M1100.5,787.3 q0,-5 4.5,-5 q4.5,0 4.5,5 z" fill="#4d9de2"/><circle cx="1102.5" cy="787.8" r="1.3" fill="#2f6fb0"/><circle cx="1107.5" cy="787.8" r="1.3" fill="#2f6fb0"/>
<path d="M1118.3,791.5 v2.3" stroke="#cfcfcf" stroke-width="0.7"/>
<rect x="1114.3" y="781.3" width="7.5" height="7.5" fill="none" stroke="#3a8fd8" stroke-width="0.7" stroke-dasharray="1.2 0.8"/><path d="M1119.3,789.3 l3,-3" stroke="#f5a623" stroke-width="1"/>
<path d="M1131.7,791.5 v2.3" stroke="#cfcfcf" stroke-width="0.7"/>
<rect x="1127.7" y="781.3" width="7" height="8" fill="#4d9de2"/><path d="M1134.7,781.3 l1.5,-1 v8 l-1.5,1z" fill="#2f7bc0"/><rect x="1127.7" y="788.3" width="7" height="1.2" fill="#bbb"/>
<path d="M1145.0,791.5 v2.3" stroke="#cfcfcf" stroke-width="0.7"/>
<rect x="1141" y="781.3" width="7" height="8" fill="#4d9de2"/><path d="M1148,781.3 l1.5,-1 v8 l-1.5,1z" fill="#2f7bc0"/><rect x="1141" y="788.3" width="7" height="1.2" fill="#bbb"/>
<path d="M1158.3,791.5 v2.3" stroke="#cfcfcf" stroke-width="0.7"/>
<path d="M1154.3,789.3 v-4 a4,4 0 0 1 4,-4 h4 v8z" fill="#e6e6e6" stroke="#888" stroke-width="0.6"/>
<path d="M1170.8,791.5 v2.3" stroke="#cfcfcf" stroke-width="0.7"/>
<path d="M1166.8,789.3 v-4 a4,4 0 0 1 4,-4 h4 v8z" fill="#e6e6e6" stroke="#888" stroke-width="0.6"/>
<path d="M1184.2,791.5 v2.3" stroke="#cfcfcf" stroke-width="0.7"/>
<rect x="1180.2" y="781.3" width="8" height="8" rx="2" fill="#e6e6e6" stroke="#888" stroke-width="0.7"/><path d="M1182.2,786.3 q2,-4 4,-2" stroke="#888" stroke-width="0.6" fill="none"/>
<path d="M1197.5,791.5 v2.3" stroke="#cfcfcf" stroke-width="0.7"/>
<rect x="1193.5" y="781.3" width="8" height="8" fill="#fff" stroke="#888" stroke-width="0.5"/><rect x="1193.5" y="781.3" width="4" height="4" fill="#4d9de2"/><rect x="1197.5" y="785.3" width="4" height="4" fill="#4d9de2"/>
<path d="M1210.8,791.5 v2.3" stroke="#cfcfcf" stroke-width="0.7"/>
<path d="M1206.8,789.3 v-6 l2,-2 l2,3 l2,-3 l2,2 v6 l-2,-2 v-3 l-2,2 l-2,-2 v3z" fill="#d4d4d4" stroke="#888" stroke-width="0.6"/>
<path d="M1224.2,791.5 v2.3" stroke="#cfcfcf" stroke-width="0.7"/>
<rect x="1220.2" y="783.8" width="5.5" height="5.5" fill="#e6e6e6" stroke="#888" stroke-width="0.6"/><rect x="1222.7" y="781.3" width="5.5" height="5.5" fill="#eee" stroke="#888" stroke-width="0.6"/>
<path d="M1237.5,791.5 v2.3" stroke="#cfcfcf" stroke-width="0.7"/>
<rect x="1233.5" y="781.3" width="7.5" height="7.5" fill="none" stroke="#3a8fd8" stroke-width="0.7" stroke-dasharray="1.2 0.8"/><path d="M1238.5,789.3 l3,-3" stroke="#f5a623" stroke-width="1"/>
<path d="M1250.0,791.5 v2.3" stroke="#cfcfcf" stroke-width="0.7"/>
<rect x="1246" y="781.3" width="7" height="8" fill="#4d9de2"/><path d="M1253,781.3 l1.5,-1 v8 l-1.5,1z" fill="#2f7bc0"/><rect x="1246" y="788.3" width="7" height="1.2" fill="#bbb"/>
<path d="M1263.5,791.5 v2.3" stroke="#cfcfcf" stroke-width="0.7"/>
<path d="M1259.5,789.3 v-4 a4,4 0 0 1 4,-4 h4 v8z" fill="#e6e6e6" stroke="#888" stroke-width="0.6"/>
<path d="M1276.7,791.5 v2.3" stroke="#cfcfcf" stroke-width="0.7"/>
<path d="M1272.7,789.3 v-4 a4,4 0 0 1 4,-4 h4 v8z" fill="#e6e6e6" stroke="#888" stroke-width="0.6"/>
<path d="M1290.0,791.5 v2.3" stroke="#cfcfcf" stroke-width="0.7"/>
<rect x="1286" y="783.8" width="5.5" height="5.5" fill="#e6e6e6" stroke="#888" stroke-width="0.6"/><rect x="1288.5" y="781.3" width="5.5" height="5.5" fill="#eee" stroke="#888" stroke-width="0.6"/>
<path d="M1303.3,791.5 v2.3" stroke="#cfcfcf" stroke-width="0.7"/>
<rect x="1299.3" y="781.3" width="7.5" height="7.5" fill="none" stroke="#3a8fd8" stroke-width="0.7" stroke-dasharray="1.2 0.8"/><path d="M1304.3,789.3 l3,-3" stroke="#f5a623" stroke-width="1"/>
<path d="M1316.7,791.5 v2.3" stroke="#cfcfcf" stroke-width="0.7"/>
<rect x="1312.7" y="781.3" width="7" height="8" fill="#4d9de2"/><path d="M1319.7,781.3 l1.5,-1 v8 l-1.5,1z" fill="#2f7bc0"/><rect x="1312.7" y="788.3" width="7" height="1.2" fill="#bbb"/>
<path d="M1330.0,791.5 v2.3" stroke="#cfcfcf" stroke-width="0.7"/>
<path d="M1326,789.3 v-4 a4,4 0 0 1 4,-4 h4 v8z" fill="#e6e6e6" stroke="#888" stroke-width="0.6"/>
<path d="M1342.5,791.5 v2.3" stroke="#cfcfcf" stroke-width="0.7"/>
<path d="M1338.5,789.3 v-4 a4,4 0 0 1 4,-4 h4 v8z" fill="#e6e6e6" stroke="#888" stroke-width="0.6"/>
<path d="M1355.8,791.5 v2.3" stroke="#cfcfcf" stroke-width="0.7"/>
<path d="M1351.8,788.3 l7,-7 M1352.8,789.3 l7,-7" stroke="#4aa85a" stroke-width="1.2"/><path d="M1353.8,784.3 l3,3" stroke="#e8904a" stroke-width="1.5"/>
<path d="M1369.0,791.5 v2.3" stroke="#cfcfcf" stroke-width="0.7"/>
<path d="M1369,780.8 l4.5,4.5 l-4.5,4.5 l-4.5,-4.5z" fill="#e8965a"/><rect x="1365" y="786.3" width="3.5" height="3.5" fill="#ddd" stroke="#888" stroke-width="0.4"/>
<path d="M1382.5,791.5 v2.3" stroke="#cfcfcf" stroke-width="0.7"/>
<path d="M1378.5,788.3 l7,-7 M1379.5,789.3 l7,-7" stroke="#4aa85a" stroke-width="1.2"/><path d="M1380.5,784.3 l3,3" stroke="#e8904a" stroke-width="1.5"/>
<path d="M1395.8,791.5 v2.3" stroke="#cfcfcf" stroke-width="0.7"/>
<rect x="1391.8" y="781.3" width="7.5" height="7.5" fill="none" stroke="#3a8fd8" stroke-width="0.7" stroke-dasharray="1.2 0.8"/><path d="M1396.8,789.3 l3,-3" stroke="#f5a623" stroke-width="1"/>
<path d="M1409.0,791.5 v2.3" stroke="#cfcfcf" stroke-width="0.7"/>
<rect x="1405" y="781.3" width="7" height="8" fill="#4d9de2"/><path d="M1412,781.3 l1.5,-1 v8 l-1.5,1z" fill="#2f7bc0"/><rect x="1405" y="788.3" width="7" height="1.2" fill="#bbb"/>
<path d="M1421.7,791.5 v2.3" stroke="#cfcfcf" stroke-width="0.7"/>
<rect x="1417.7" y="781.3" width="7" height="8" fill="#4d9de2"/><path d="M1424.7,781.3 l1.5,-1 v8 l-1.5,1z" fill="#2f7bc0"/><rect x="1417.7" y="788.3" width="7" height="1.2" fill="#bbb"/>
<path d="M1435.0,791.5 v2.3" stroke="#cfcfcf" stroke-width="0.7"/>
<rect x="1431" y="781.3" width="8" height="8" rx="2" fill="#e6e6e6" stroke="#888" stroke-width="0.7"/><path d="M1433,786.3 q2,-4 4,-2" stroke="#888" stroke-width="0.6" fill="none"/>
<path d="M1448.3,791.5 v2.3" stroke="#cfcfcf" stroke-width="0.7"/>
<rect x="1444.3" y="781.3" width="8" height="8" fill="#fff" stroke="#888" stroke-width="0.5"/><rect x="1444.3" y="781.3" width="4" height="4" fill="#4d9de2"/><rect x="1448.3" y="785.3" width="4" height="4" fill="#4d9de2"/>
<path d="M1461.7,791.5 v2.3" stroke="#cfcfcf" stroke-width="0.7"/>
<path d="M1457.7,789.3 v-6 l2,-2 l2,3 l2,-3 l2,2 v6 l-2,-2 v-3 l-2,2 l-2,-2 v3z" fill="#d4d4d4" stroke="#888" stroke-width="0.6"/>
<path d="M1475.0,791.5 v2.3" stroke="#cfcfcf" stroke-width="0.7"/>
<rect x="1471" y="781.3" width="7" height="8" fill="#4d9de2"/><path d="M1478,781.3 l1.5,-1 v8 l-1.5,1z" fill="#2f7bc0"/><rect x="1471" y="788.3" width="7" height="1.2" fill="#bbb"/>
<path d="M1488.3,791.5 v2.3" stroke="#cfcfcf" stroke-width="0.7"/>
<path d="M1488.3,780.8 l4.5,4.5 l-4.5,4.5 l-4.5,-4.5z" fill="#e8965a"/><rect x="1484.3" y="786.3" width="3.5" height="3.5" fill="#ddd" stroke="#888" stroke-width="0.4"/>
<path d="M1501.7,791.5 v2.3" stroke="#cfcfcf" stroke-width="0.7"/>
<rect x="1497.7" y="781.3" width="7.5" height="7.5" fill="none" stroke="#3a8fd8" stroke-width="0.7" stroke-dasharray="1.2 0.8"/><path d="M1502.7,789.3 l3,-3" stroke="#f5a623" stroke-width="1"/>
<path d="M1514.5,791.5 v2.3" stroke="#cfcfcf" stroke-width="0.7"/>
<rect x="1510.5" y="781.3" width="7" height="8" fill="#4d9de2"/><path d="M1517.5,781.3 l1.5,-1 v8 l-1.5,1z" fill="#2f7bc0"/><rect x="1510.5" y="788.3" width="7" height="1.2" fill="#bbb"/>
<path d="M1527.8,791.5 v2.3" stroke="#cfcfcf" stroke-width="0.7"/>
<path d="M1523.8,789.3 v-4 a4,4 0 0 1 4,-4 h4 v8z" fill="#e6e6e6" stroke="#888" stroke-width="0.6"/>
<path d="M1540.7,791.5 v2.3" stroke="#cfcfcf" stroke-width="0.7"/>
<rect x="1536.7" y="781.3" width="7.5" height="7.5" fill="none" stroke="#3a8fd8" stroke-width="0.7" stroke-dasharray="1.2 0.8"/><path d="M1541.7,789.3 l3,-3" stroke="#f5a623" stroke-width="1"/>
<path d="M1554.0,791.5 v2.3" stroke="#cfcfcf" stroke-width="0.7"/>
<rect x="1550" y="781.3" width="7" height="8" fill="#4d9de2"/><path d="M1557,781.3 l1.5,-1 v8 l-1.5,1z" fill="#2f7bc0"/><rect x="1550" y="788.3" width="7" height="1.2" fill="#bbb"/>
<path d="M1567.2,791.5 v2.3" stroke="#cfcfcf" stroke-width="0.7"/>
<rect x="1563.2" y="781.3" width="7.5" height="7.5" fill="none" stroke="#3a8fd8" stroke-width="0.7" stroke-dasharray="1.2 0.8"/><path d="M1568.2,789.3 l3,-3" stroke="#f5a623" stroke-width="1"/>
<path d="M1580.0,791.5 v2.3" stroke="#cfcfcf" stroke-width="0.7"/>
<rect x="1576" y="781.3" width="7" height="8" fill="#4d9de2"/><path d="M1583,781.3 l1.5,-1 v8 l-1.5,1z" fill="#2f7bc0"/><rect x="1576" y="788.3" width="7" height="1.2" fill="#bbb"/>
<path d="M1593.8,791.5 v2.3" stroke="#cfcfcf" stroke-width="0.7"/>
<rect x="1589.75" y="781.3" width="8" height="8" rx="2" fill="#e6e6e6" stroke="#888" stroke-width="0.7"/><path d="M1591.75,786.3 q2,-4 4,-2" stroke="#888" stroke-width="0.6" fill="none"/>
<path d="M1607.3,791.5 v2.3" stroke="#cfcfcf" stroke-width="0.7"/>
<path d="M1603.3,789.3 v-6 l2,-2 l2,3 l2,-3 l2,2 v6 l-2,-2 v-3 l-2,2 l-2,-2 v3z" fill="#d4d4d4" stroke="#888" stroke-width="0.6"/>
<path d="M1619.8,791.5 v2.3" stroke="#cfcfcf" stroke-width="0.7"/>
<rect x="1615.8" y="781.3" width="8" height="8" rx="2" fill="#e6e6e6" stroke="#888" stroke-width="0.7"/><path d="M1617.8,786.3 q2,-4 4,-2" stroke="#888" stroke-width="0.6" fill="none"/>
<path d="M1633.3,791.5 v2.3" stroke="#cfcfcf" stroke-width="0.7"/>
<path d="M1629.3,789.3 v-6 l2,-2 l2,3 l2,-3 l2,2 v6 l-2,-2 v-3 l-2,2 l-2,-2 v3z" fill="#d4d4d4" stroke="#888" stroke-width="0.6"/>
<path d="M1646.9,791.5 v2.3" stroke="#cfcfcf" stroke-width="0.7"/>
<rect x="1642.9" y="781.3" width="8" height="8" rx="2" fill="#e6e6e6" stroke="#888" stroke-width="0.7"/><path d="M1644.9,786.3 q2,-4 4,-2" stroke="#888" stroke-width="0.6" fill="none"/>
<path d="M1659.4,791.5 v2.3" stroke="#cfcfcf" stroke-width="0.7"/>
<path d="M1655.4,789.3 v-6 l2,-2 l2,3 l2,-3 l2,2 v6 l-2,-2 v-3 l-2,2 l-2,-2 v3z" fill="#d4d4d4" stroke="#888" stroke-width="0.6"/>
<path d="M1672.9,791.5 v2.3" stroke="#cfcfcf" stroke-width="0.7"/>
<rect x="1668.9" y="781.3" width="8" height="8" rx="2" fill="#e6e6e6" stroke="#888" stroke-width="0.7"/><path d="M1670.9,786.3 q2,-4 4,-2" stroke="#888" stroke-width="0.6" fill="none"/>
<path d="M1686.5,791.5 v2.3" stroke="#cfcfcf" stroke-width="0.7"/>
<path d="M1682.5,789.3 v-6 l2,-2 l2,3 l2,-3 l2,2 v6 l-2,-2 v-3 l-2,2 l-2,-2 v3z" fill="#d4d4d4" stroke="#888" stroke-width="0.6"/>
<path d="M1699.0,791.5 v2.3" stroke="#cfcfcf" stroke-width="0.7"/>
<path d="M1696,783.3 a3,3 0 1 1 5,2 l2,3 h-8z" fill="#5a9de0" stroke="#3366aa" stroke-width="0.5"/>
<path d="M1712.5,791.5 v2.3" stroke="#cfcfcf" stroke-width="0.7"/>
<path d="M1708.5,789.3 v-6 l2,-2 l2,3 l2,-3 l2,2 v6 l-2,-2 v-3 l-2,2 l-2,-2 v3z" fill="#d4d4d4" stroke="#888" stroke-width="0.6"/>
<path d="M1726.0,791.5 v2.3" stroke="#cfcfcf" stroke-width="0.7"/>
<rect x="1722" y="781.3" width="3.5" height="3.5" fill="#fff" stroke="#777" stroke-width="0.6"/><rect x="1726.5" y="785.8" width="3.5" height="3.5" fill="#fff" stroke="#777" stroke-width="0.6"/><path d="M1724,785.3 v2 h2" stroke="#777" stroke-width="0.5" fill="none"/>
<path d="M1738.5,791.5 v2.3" stroke="#cfcfcf" stroke-width="0.7"/>
<path d="M1734.5,789.3 v-6 l2,-2 l2,3 l2,-3 l2,2 v6 l-2,-2 v-3 l-2,2 l-2,-2 v3z" fill="#d4d4d4" stroke="#888" stroke-width="0.6"/>
<path d="M1752.0,791.5 v2.3" stroke="#cfcfcf" stroke-width="0.7"/>
<rect x="1748" y="781.3" width="3.5" height="3.5" fill="#fff" stroke="#777" stroke-width="0.6"/><rect x="1752.5" y="785.8" width="3.5" height="3.5" fill="#fff" stroke="#777" stroke-width="0.6"/><path d="M1750,785.3 v2 h2" stroke="#777" stroke-width="0.5" fill="none"/>
<path d="M1765.6,791.5 v2.3" stroke="#cfcfcf" stroke-width="0.7"/>
<path d="M1761.6,789.3 v-6 l2,-2 l2,3 l2,-3 l2,2 v6 l-2,-2 v-3 l-2,2 l-2,-2 v3z" fill="#d4d4d4" stroke="#888" stroke-width="0.6"/>
<path d="M1778.0,791.5 v2.3" stroke="#cfcfcf" stroke-width="0.7"/>
<rect x="1774" y="781.3" width="3.5" height="3.5" fill="#fff" stroke="#777" stroke-width="0.6"/><rect x="1778.5" y="785.8" width="3.5" height="3.5" fill="#fff" stroke="#777" stroke-width="0.6"/><path d="M1776,785.3 v2 h2" stroke="#777" stroke-width="0.5" fill="none"/>
<path d="M1791.7,791.5 v2.3" stroke="#cfcfcf" stroke-width="0.7"/>
<path d="M1787.7,789.3 v-6 l2,-2 l2,3 l2,-3 l2,2 v6 l-2,-2 v-3 l-2,2 l-2,-2 v3z" fill="#d4d4d4" stroke="#888" stroke-width="0.6"/>
<path d="M1804.2,791.5 v2.3" stroke="#cfcfcf" stroke-width="0.7"/>
<path d="M1800.2,789.3 v-4 a4,4 0 0 1 4,-4 h4 v8z" fill="#e6e6e6" stroke="#888" stroke-width="0.6"/>
<path d="M1818.0,791.5 v2.3" stroke="#cfcfcf" stroke-width="0.7"/>
<rect x="1812" y="779.3" width="13" height="13" fill="#1a8fd6"/><circle cx="1819" cy="787.3" r="0.8" fill="#f5c542"/>
<path d="M1831.2,791.5 v2.3" stroke="#cfcfcf" stroke-width="0.7"/>
<rect x="1827.25" y="781.3" width="7" height="8" fill="#4d9de2"/><path d="M1834.25,781.3 l1.5,-1 v8 l-1.5,1z" fill="#2f7bc0"/><rect x="1827.25" y="788.3" width="7" height="1.2" fill="#bbb"/>
<path d="M1844.8,791.5 v2.3" stroke="#cfcfcf" stroke-width="0.7"/>
<rect x="1840.8" y="781.3" width="3.5" height="3.5" fill="#fff" stroke="#777" stroke-width="0.6"/><rect x="1845.3" y="785.8" width="3.5" height="3.5" fill="#fff" stroke="#777" stroke-width="0.6"/><path d="M1842.8,785.3 v2 h2" stroke="#777" stroke-width="0.5" fill="none"/>
<path d="M1857.9,791.5 v2.3" stroke="#cfcfcf" stroke-width="0.7"/>
<path d="M1853.9,789.3 v-4 a4,4 0 0 1 4,-4 h4 v8z" fill="#e6e6e6" stroke="#888" stroke-width="0.6"/>
<rect x="271.3" y="792" width="4" height="4" fill="#777"/><rect x="272.3" y="793" width="2" height="2" fill="#eee"/>
<rect x="693" y="792" width="4" height="4" fill="#777"/><rect x="694" y="793" width="2" height="2" fill="#eee"/>
<rect x="851.5" y="792" width="4" height="4" fill="#777"/><rect x="852.5" y="793" width="2" height="2" fill="#eee"/>
<rect x="1696.5" y="792" width="4" height="4" fill="#777"/><rect x="1697.5" y="793" width="2" height="2" fill="#eee"/>
<path d="M1877,780.5 l1,2 l2,-0.5 l0.5,2 l2,1 l-1.3,1.7 l1.3,1.7 l-2,1 l-0.5,2 l-2,-0.5 l-1,2 l-1,-2 l-2,0.5 l-0.5,-2 l-2,-1 l1.3,-1.7 l-1.3,-1.7 l2,-1 l0.5,-2 l2,0.5z" fill="#777"/><circle cx="1877" cy="785.7" r="1.6" fill="#f0f0f0"/>
<text x="1782.3" y="765.8" font-size="6.8" fill="#333" font-weight="normal" text-anchor="start" textLength="81.9" lengthAdjust="spacingAndGlyphs" stroke="#333" stroke-width="0.25">2 Profiles  |  Angle : 0.0 deg</text>
<circle cx="1877.5" cy="763.5" r="4" fill="#222"/><path d="M1875,764 q2.5,-3.5 5,0" stroke="#fff" stroke-width="1" fill="none"/>
<rect x="894.7" y="754.4" width="130.3" height="13.1" fill="#fbfbfb" stroke="#bbb" stroke-width="0.5"/>
<path d="M900.6,756.5 l4.5,4.5 l-4.5,4.5 l-4.5,-4.5z" fill="#cfe0ef" stroke="#7a8a9a" stroke-width="0.7"/><circle cx="900.6" cy="761" r="1" fill="#3b8fd4"/>
<path d="M908.3000000000001,760.3 h2.8 l-1.4,1.8z" fill="#333"/>
<path d="M969.2,760.3 h2.8 l-1.4,1.8z" fill="#333"/>
<path d="M986.0,760.3 h2.8 l-1.4,1.8z" fill="#333"/>
<path d="M1003.1,760.3 h2.8 l-1.4,1.8z" fill="#333"/>
<path d="M1019.9,760.3 h2.8 l-1.4,1.8z" fill="#333"/>
<rect x="914.5" y="758.5" width="8.5" height="6" rx="1" fill="none" stroke="#888" stroke-width="0.8"/><rect x="916.5" y="760.5" width="4.5" height="2" fill="#999"/>
<path d="M930,765 q-2,-4 0,-6 q1,-2 2,0 v-2 q1,-1.5 2,0 v1 q1,-1.5 2,0 v2 q1,-1 1.5,0.5 q0,4 -2,5z" fill="none" stroke="#777" stroke-width="0.7"/>
<circle cx="946" cy="760" r="2.6" fill="none" stroke="#555" stroke-width="0.8"/><path d="M947.8,762 l2.5,2.5" stroke="#333" stroke-width="1.2"/><path d="M950,757 v2.5 M948.8,758.2 h2.5" stroke="#555" stroke-width="0.5"/>
<circle cx="960.5" cy="760" r="3.2" fill="#eef5f5" stroke="#666" stroke-width="0.8"/><path d="M962.8,762.4 l2.6,2.6" stroke="#333" stroke-width="1.3"/>
<rect x="975.5" y="756.8" width="9.3" height="6.5" rx="1" fill="#6f94bf"/><rect x="977" y="758" width="6.3" height="4" fill="#a9c6e8"/><rect x="978.5" y="763.3" width="3.3" height="1.7" fill="#6f94bf"/>
<rect x="992.5" y="756.5" width="9.3" height="9.3" rx="1" fill="#9c9c9c"/>
<rect x="1009.4" y="757" width="9.3" height="8" fill="#5b8fd0"/><path d="M1009.4,761 h9.3 M1014,757 v8" stroke="#cfe2f6" stroke-width="0.9"/>
<path d="M1835,123.4 L1852,118 L1873,122.4 L1871.4,145.8 L1856,155.7 L1836,148 Z" fill="#ececec" stroke="#d0d0d0" stroke-width="0.6"/>
<path d="M1835,123.4 L1856,131 L1873,122.4 M1856,131 L1856,155.7" fill="none" stroke="#d6d6d6" stroke-width="0.6"/>
<path d="M1836,148 L1856,155.7 L1871.4,145.8 L1874,150 L1856,160 L1838,152z" fill="#e0e0e0" opacity="0.6"/>
<text x="1839" y="138" font-size="3.3" fill="#999" font-weight="normal" text-anchor="start" transform="rotate(12 1839 138)">FRONT</text>
<text x="1858" y="143" font-size="3.3" fill="#999" font-weight="normal" text-anchor="start" transform="rotate(-30 1858 143)">RIGHT</text>
<path d="M1852,118 v-7" stroke="#6fd86f" stroke-width="0.8"/><text x="1852" y="114" font-size="5" fill="#7ed97e" font-weight="normal" text-anchor="middle" >Y</text>
<path d="M1836,148 l-3,2" stroke="#6a6ae8" stroke-width="0.8"/><text x="1830" y="153" font-size="5" fill="#6a6ae8" font-weight="normal" text-anchor="middle" >Z</text>
<path d="M1871.4,145.8 l3,1.5" stroke="#e87070" stroke-width="0.8"/><text x="1878" y="150" font-size="5" fill="#e87070" font-weight="normal" text-anchor="middle" >X</text>
<rect x="500.5" y="228.5" width="164" height="137.5" fill="#f2f2f2" stroke="#d2d2d2" stroke-width="0.8"/>
<rect x="501" y="229" width="163" height="13" fill="#efefef"/><path d="M501,242.2 h163" stroke="#dadada" stroke-width="0.8"/>
<circle cx="505.7" cy="235.2" r="2.5" fill="#333"/><rect x="504" y="234.8" width="3.4" height="0.8" fill="#eee"/>
<text x="514" y="237.6" font-size="6.6" fill="#595959" font-weight="normal" text-anchor="start" textLength="74.9" lengthAdjust="spacingAndGlyphs">CREATE ASSOCIATIVE PCB</text>
<text x="507" y="252.8" font-size="6.6" fill="#4a4a4a" font-weight="normal" text-anchor="start" textLength="18.1" lengthAdjust="spacingAndGlyphs" stroke="#4a4a4a" stroke-width="0.15">Profile</text>
<text x="507" y="269.5" font-size="6.6" fill="#4a4a4a" font-weight="normal" text-anchor="start" textLength="18.1" lengthAdjust="spacingAndGlyphs" stroke="#4a4a4a" stroke-width="0.15">Origin</text>
<text x="507" y="286.2" font-size="6.6" fill="#4a4a4a" font-weight="normal" text-anchor="start" textLength="18" lengthAdjust="spacingAndGlyphs" stroke="#4a4a4a" stroke-width="0.15">X Axis</text>
<text x="507" y="302.4" font-size="6.6" fill="#4a4a4a" font-weight="normal" text-anchor="start" textLength="30.5" lengthAdjust="spacingAndGlyphs" stroke="#4a4a4a" stroke-width="0.15">Flip X Axis</text>
<text x="507" y="319" font-size="6.6" fill="#4a4a4a" font-weight="normal" text-anchor="start" textLength="30.5" lengthAdjust="spacingAndGlyphs" stroke="#4a4a4a" stroke-width="0.15">Flip Z Axis</text>
<rect x="545" y="243.5" width="44.3" height="14" rx="1" fill="#1a8fd6"/>
<path d="M549.5,247 v6 l1.4,-1.3 l1,2 l0.8,-0.4 l-1,-2 h2z" fill="#fff"/>
<text x="557" y="253" font-size="6.8" fill="#fff" font-weight="normal" text-anchor="start" textLength="29" lengthAdjust="spacingAndGlyphs" stroke="#fff" stroke-width="0.2">2 selected</text>
<path d="M596,248.5 l3.6,3.6 M599.6,248.5 l-3.6,3.6" stroke="#333" stroke-width="0.9"/>
<rect x="545" y="259.7" width="32" height="14.2" rx="1" fill="#fff" stroke="#e2e2e2" stroke-width="0.6"/>
<path d="M549.5,263.2 v6 l1.4,-1.3 l1,2 l0.8,-0.4 l-1,-2 h2z" fill="#fff" stroke="#555" stroke-width="0.5"/>
<text x="556.5" y="269.3" font-size="6.6" fill="#333" font-weight="normal" text-anchor="start" textLength="17" lengthAdjust="spacingAndGlyphs">Select</text>
<rect x="545" y="276.7" width="32" height="14.2" rx="1" fill="#fff" stroke="#e2e2e2" stroke-width="0.6"/>
<path d="M549.5,280.2 v6 l1.4,-1.3 l1,2 l0.8,-0.4 l-1,-2 h2z" fill="#fff" stroke="#555" stroke-width="0.5"/>
<text x="556.5" y="286.3" font-size="6.6" fill="#333" font-weight="normal" text-anchor="start" textLength="17" lengthAdjust="spacingAndGlyphs">Select</text>
<rect x="545" y="293" width="12" height="14" rx="1" fill="#1a8fd6"/><path d="M550,302 l3,-3" stroke="#3c74a8" stroke-width="0.5"/>
<path d="M549,319 l4,-4.5" stroke="#2a8fdd" stroke-width="1" stroke-dasharray="1.5 0.7"/><path d="M552,314 l1.8,-0.5 l-0.3,1.8z M548.3,318.5 l-0.5,1.5 l1.5,-0.3z" fill="#2a8fdd"/>
<path d="M501,345.7 h163" stroke="#dadada" stroke-width="0.8"/>
<rect x="582.4" y="350.7" width="33.3" height="10.1" fill="#ececec" stroke="#d0d0d0" stroke-width="0.6"/><text x="594" y="358.3" font-size="6.8" fill="#555" font-weight="normal" text-anchor="start" textLength="9" lengthAdjust="spacingAndGlyphs">OK</text>
<rect x="625.5" y="350.7" width="32.7" height="10.1" fill="#ececec" stroke="#d0d0d0" stroke-width="0.6"/><text x="631.4" y="358.3" font-size="6.8" fill="#555" font-weight="normal" text-anchor="start" textLength="20.6" lengthAdjust="spacingAndGlyphs">Cancel</text>
</g>
<rect x="30" y="20" width="1860" height="779" rx="6" fill="none" stroke="#3a3a3a" stroke-width="0.8"/>
</svg>
</body></html>
